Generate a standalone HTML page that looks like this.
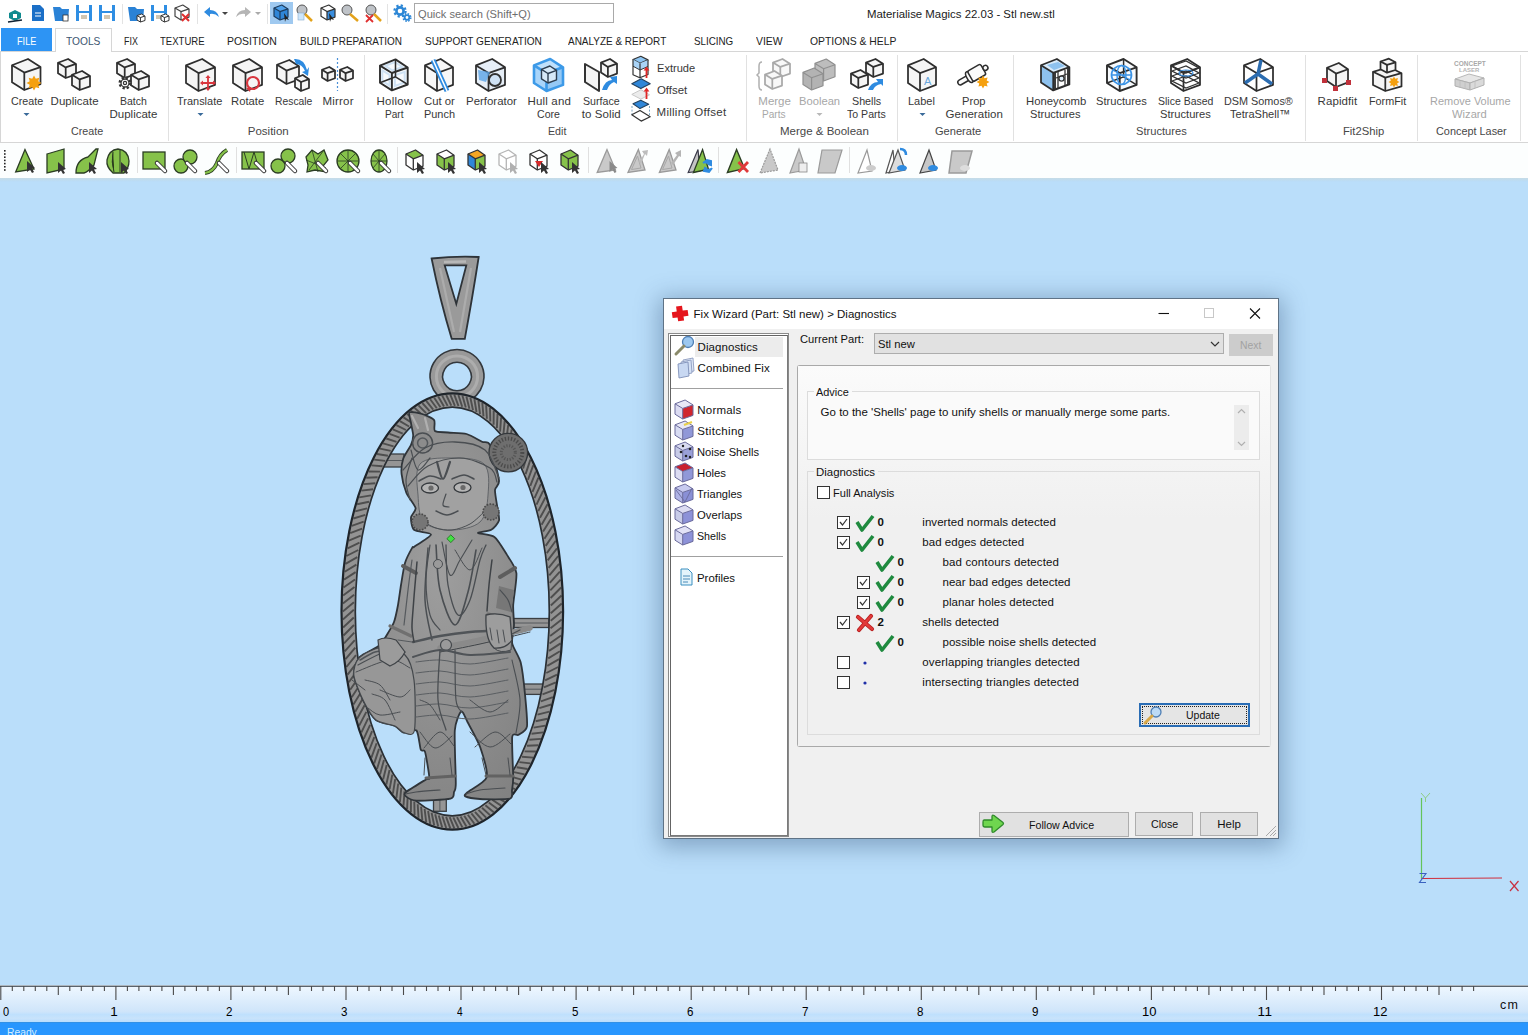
<!DOCTYPE html>
<html><head><meta charset="utf-8"><title>Materialise Magics</title>
<style>
*{margin:0;padding:0;box-sizing:border-box}
html,body{width:1528px;height:1035px;overflow:hidden;background:#badefa;font-family:"Liberation Sans",sans-serif;color:#1e1e1e;position:relative}
.a{position:absolute;white-space:nowrap;transform-origin:0 0}
.b{position:absolute}
svg{position:absolute;overflow:visible}
</style></head><body>
<div class="b" style="left:0;top:0;width:1528px;height:52px;background:#fff"></div>
<div class="b" style="left:0;top:51px;width:1528px;height:1px;background:#d6d6d6"></div>
<div class="b" style="left:1px;top:28px;width:51px;height:23px;background:#2d94f4"></div>
<div class="b" style="left:55px;top:28px;width:57px;height:24px;background:#fff;border:1px solid #d6d6d6;border-bottom:none"></div>
<div class="b" style="left:0;top:52px;width:1528px;height:90px;background:#fff;border-left:1px solid #d6d6d6"></div>
<div class="b" style="left:0;top:142px;width:1528px;height:1px;background:#d6d6d6"></div>
<div class="b" style="left:0;top:143px;width:1528px;height:35px;background:#fcfefe"></div>
<div class="b" style="left:0;top:178px;width:1528px;height:4px;background:linear-gradient(#c6dbe6,#bddcf2 60%,#b9ddfb)"></div>
<div class="b" style="left:414px;top:3px;width:200px;height:20px;border:1px solid #a9a9a9;background:#fff"></div>
<div class="b" style="left:270px;top:2px;width:23px;height:22px;background:#9fc9f0"></div>
<svg style="left:0;top:0" width="1528" height="1035" viewBox="0 0 1528 1035"><defs><radialGradient id="mg" cx="0.5" cy="0.4" r="0.7"><stop offset="0" stop-color="#9e9e9e"/><stop offset="1" stop-color="#828282"/></radialGradient></defs><rect x="378" y="454" width="26" height="13" fill="#959595" stroke="#3a3e42" stroke-width="1.3"/><line x1="378" y1="460.5" x2="404" y2="460.5" stroke="#55595d" stroke-width="1"/><rect x="508" y="618.5" width="41" height="9.0" fill="#959595" stroke="#3a3e42" stroke-width="1.3"/><line x1="508" y1="623.0" x2="549" y2="623.0" stroke="#55595d" stroke-width="1"/><rect x="522" y="684" width="23" height="10.399999999999977" fill="#959595" stroke="#3a3e42" stroke-width="1.3"/><line x1="522" y1="689.2" x2="545" y2="689.2" stroke="#55595d" stroke-width="1"/><rect x="433.5" y="796" width="12.800000000000011" height="15.299999999999955" fill="#959595" stroke="#3a3e42" stroke-width="1.3"/><line x1="439.9" y1="796" x2="439.9" y2="811.3" stroke="#55595d" stroke-width="1"/><path d="M431.6,258.5 Q455,256 478.7,257 Q472,300 464.8,338.8 L451.7,338.8 Q440,300 431.6,258.5Z M444.7,265.4 L466.3,265.4 L456.3,304Z" fill="#9a9a9a" fill-rule="evenodd" stroke="#2e3338" stroke-width="1.8"/><path d="M444,262 L466,261.5" stroke="#b8b8b8" stroke-width="2.6" fill="none"/><path d="M440,268 L454,332 M471,268 L460,332" stroke="#acacac" stroke-width="2.2" fill="none"/><path d="M457,349.5 a27,27 0 1,0 0.01,0Z M457,362.2 a14.3,14.3 0 1,1 -0.01,0Z" fill="#999999" fill-rule="evenodd" stroke="#33383d" stroke-width="1.6"/><circle cx="457" cy="376.5" r="20.6" fill="none" stroke="#adadad" stroke-width="3"/><ellipse cx="452.3" cy="611.5" rx="104" ry="211.3" fill="none" stroke="#939393" stroke-width="13.5"/><path d="M561.8,611.5L550.7,620.8M561.7,619.5L550.5,628.3M561.5,627.5L550.1,635.9M561.1,635.5L549.6,643.5M560.6,643.4L549.0,650.9M559.9,651.3L548.2,658.4M559.1,659.2L547.3,665.8M558.2,667.0L546.3,673.0M557.0,674.7L545.1,680.3M555.8,682.3L543.9,687.4M554.4,689.8L542.5,694.4M552.9,697.2L540.9,701.3M551.2,704.5L539.3,708.1M549.4,711.7L537.5,714.7M547.5,718.7L535.6,721.2M545.4,725.6L533.6,727.6M543.2,732.4L531.5,733.8M540.9,738.9L529.3,739.8M538.4,745.3L527.0,745.7M535.9,751.5L524.6,751.4M533.2,757.6L522.0,756.8M530.4,763.4L519.4,762.1M527.6,769.0L516.7,767.2M524.6,774.4L513.9,772.1M521.5,779.6L511.0,776.7M518.3,784.5L508.1,781.1M515.0,789.2L505.0,785.3M511.7,793.7L501.9,789.3M508.2,797.9L498.7,793.0M504.7,801.9L495.5,796.5M501.1,805.6L492.2,799.7M497.5,809.0L488.8,802.6M493.7,812.2L485.4,805.3M490.0,815.1L482.0,807.7M486.1,817.7L478.5,809.9M482.3,820.0L475.0,811.8M478.4,822.1L471.4,813.4M474.4,823.8L467.8,814.7M470.4,825.3L464.2,815.8M466.4,826.5L460.6,816.6M462.4,827.4L457.0,817.1M458.4,828.0L453.3,817.3M454.3,828.3L449.7,817.2M450.3,828.3L446.1,816.9M446.2,828.0L442.4,816.3M442.2,827.4L438.8,815.4M438.2,826.5L435.2,814.2M434.2,825.3L431.6,812.7M430.2,823.8L428.1,811.0M426.2,822.1L424.6,809.0M422.3,820.0L421.1,806.7M418.5,817.7L417.7,804.2M414.6,815.1L414.3,801.4M410.9,812.2L411.0,798.3M407.1,809.0L407.7,795.0M403.5,805.6L404.5,791.4M399.9,801.9L401.3,787.6M396.4,797.9L398.2,783.5M392.9,793.7L395.2,779.2M389.6,789.2L392.3,774.7M386.3,784.5L389.5,770.0M383.1,779.6L386.7,765.0M380.0,774.4L384.0,759.9M377.0,769.0L381.5,754.5M374.2,763.4L379.0,748.9M371.4,757.6L376.6,743.2M368.7,751.5L374.3,737.2M366.2,745.3L372.1,731.1M363.7,738.9L370.1,724.9M361.4,732.4L368.1,718.4M359.2,725.6L366.3,711.9M357.1,718.7L364.6,705.2M355.2,711.7L363.0,698.3M353.4,704.5L361.5,691.4M351.7,697.2L360.2,684.3M350.2,689.8L358.9,677.1M348.8,682.3L357.8,669.9M347.6,674.7L356.9,662.6M346.4,667.0L356.0,655.1M345.5,659.2L355.3,647.7M344.7,651.3L354.8,640.2M344.0,643.4L354.3,632.6M343.5,635.5L354.0,625.0M343.1,627.5L353.8,617.5M342.9,619.5L353.8,609.8M342.8,611.5L353.9,602.2M342.9,603.5L354.1,594.7M343.1,595.5L354.5,587.1M343.5,587.5L355.0,579.5M344.0,579.6L355.6,572.1M344.7,571.7L356.4,564.6M345.5,563.8L357.3,557.2M346.4,556.0L358.3,550.0M347.6,548.3L359.5,542.7M348.8,540.7L360.7,535.6M350.2,533.2L362.1,528.6M351.7,525.8L363.7,521.7M353.4,518.5L365.3,514.9M355.2,511.3L367.1,508.3M357.1,504.3L369.0,501.8M359.2,497.4L371.0,495.4M361.4,490.6L373.1,489.2M363.7,484.1L375.3,483.2M366.2,477.7L377.6,477.3M368.7,471.5L380.0,471.6M371.4,465.4L382.6,466.2M374.2,459.6L385.2,460.9M377.0,454.0L387.9,455.8M380.0,448.6L390.7,450.9M383.1,443.4L393.6,446.3M386.3,438.5L396.5,441.9M389.6,433.8L399.6,437.7M392.9,429.3L402.7,433.7M396.4,425.1L405.9,430.0M399.9,421.1L409.1,426.5M403.5,417.4L412.4,423.3M407.1,414.0L415.8,420.4M410.9,410.8L419.2,417.7M414.6,407.9L422.6,415.3M418.5,405.3L426.1,413.1M422.3,403.0L429.6,411.2M426.2,400.9L433.2,409.6M430.2,399.2L436.8,408.3M434.2,397.7L440.4,407.2M438.2,396.5L444.0,406.4M442.2,395.6L447.6,405.9M446.2,395.0L451.3,405.7M450.3,394.7L454.9,405.8M454.3,394.7L458.5,406.1M458.4,395.0L462.2,406.7M462.4,395.6L465.8,407.6M466.4,396.5L469.4,408.8M470.4,397.7L473.0,410.3M474.4,399.2L476.5,412.0M478.4,400.9L480.0,414.0M482.3,403.0L483.5,416.3M486.1,405.3L486.9,418.8M490.0,407.9L490.3,421.6M493.7,410.8L493.6,424.7M497.5,414.0L496.9,428.0M501.1,417.4L500.1,431.6M504.7,421.1L503.3,435.4M508.2,425.1L506.4,439.5M511.7,429.3L509.4,443.8M515.0,433.8L512.3,448.3M518.3,438.5L515.1,453.0M521.5,443.4L517.9,458.0M524.6,448.6L520.6,463.1M527.6,454.0L523.1,468.5M530.4,459.6L525.6,474.1M533.2,465.4L528.0,479.8M535.9,471.5L530.3,485.8M538.4,477.7L532.5,491.9M540.9,484.1L534.5,498.1M543.2,490.6L536.5,504.6M545.4,497.4L538.3,511.1M547.5,504.3L540.0,517.8M549.4,511.3L541.6,524.7M551.2,518.5L543.1,531.6M552.9,525.8L544.4,538.7M554.4,533.2L545.7,545.9M555.8,540.7L546.8,553.1M557.0,548.3L547.7,560.4M558.2,556.0L548.6,567.9M559.1,563.8L549.3,575.3M559.9,571.7L549.8,582.8M560.6,579.6L550.3,590.4M561.1,587.5L550.6,598.0M561.5,595.5L550.8,605.5M561.7,603.5L550.8,613.2" stroke="#4e4e4e" stroke-width="1.9" fill="none"/><ellipse cx="452.3" cy="611.5" rx="110.8" ry="218.1" fill="none" stroke="#1f252b" stroke-width="2.2"/><ellipse cx="452.3" cy="611.5" rx="97" ry="204.3" fill="none" stroke="#2a2f34" stroke-width="1.7"/><path d="M409.4,412.4 C410.7,411.3 419.1,413.1 422.0,414.0 C424.9,414.9 432.6,418.1 434.1,420.1 C435.6,422.1 433.3,429.6 434.9,431.0 C436.5,432.4 444.3,432.1 448.0,432.5 C451.7,432.9 462.6,432.9 466.6,434.0 C470.6,435.1 479.3,440.4 482.0,441.7 C484.7,443.0 488.0,440.5 490.0,445.0 C492.0,449.5 498.4,475.1 499.0,480.4 C499.6,485.6 495.2,486.8 495.0,490.0 C494.8,493.2 497.0,504.6 497.5,508.2 C498.0,511.8 499.7,518.1 499.0,520.6 C498.3,523.1 493.8,528.4 491.3,529.8 C488.9,531.2 477.6,532.2 478.0,533.0 C478.4,533.8 491.0,534.5 494.4,537.0 C497.8,539.5 504.2,550.4 506.8,554.6 C509.4,558.8 515.7,567.2 516.4,573.1 C517.1,579.0 513.5,598.9 513.2,605.0 C512.9,611.1 514.1,620.5 514.0,625.0 C513.9,629.5 511.4,638.9 512.2,643.3 C513.0,647.7 519.2,656.5 520.7,662.5 C522.2,668.5 524.3,687.0 525.0,694.4 C525.7,701.8 527.7,721.6 527.0,726.3 C526.3,731.0 520.3,733.6 518.6,734.8 C516.9,736.0 512.8,732.0 512.2,737.0 C511.6,742.0 513.2,771.1 513.2,777.3 C513.2,783.5 512.4,787.5 512.0,790.0 C511.6,792.5 513.7,797.6 510.0,798.6 C506.3,799.6 485.2,799.3 480.0,799.0 C474.8,798.7 466.9,797.2 465.4,796.4 C463.9,795.6 465.0,794.4 467.5,792.2 C470.0,790.0 485.2,782.5 486.7,777.3 C488.2,772.1 482.5,754.0 480.3,747.5 C478.1,741.0 469.7,726.2 467.5,722.0 C465.3,717.8 462.7,710.4 461.2,711.4 C459.7,712.4 455.4,722.1 454.8,730.5 C454.2,738.9 455.9,776.5 455.8,783.7 C455.7,790.9 454.6,790.3 454.0,792.0 C453.4,793.7 454.9,797.6 450.5,798.6 C446.1,799.6 421.7,801.0 416.5,800.7 C411.3,800.4 407.1,797.4 405.9,796.4 C404.7,795.4 403.6,794.2 405.9,792.2 C408.2,790.2 423.3,781.1 426.0,779.4 C428.7,777.7 429.4,780.5 429.3,777.3 C429.2,774.1 426.0,755.0 425.0,751.8 C424.0,748.6 421.8,752.2 420.8,749.7 C419.8,747.2 418.5,732.5 416.5,730.5 C414.5,728.5 406.3,733.2 403.8,732.7 C401.3,732.2 398.2,727.5 395.0,726.0 C391.8,724.5 379.7,722.9 376.0,720.0 C372.3,717.1 366.0,706.0 363.4,700.8 C360.8,695.5 354.3,680.0 353.8,675.0 C353.3,670.0 357.3,660.7 359.0,658.0 C360.7,655.3 365.6,653.5 368.0,652.0 C370.4,650.5 377.7,647.2 380.0,645.0 C382.3,642.8 386.4,635.7 388.0,633.0 C389.6,630.3 392.8,625.3 394.0,622.0 C395.2,618.7 397.2,609.3 398.0,605.0 C398.8,600.7 400.2,589.9 401.0,585.0 C401.8,580.1 403.7,567.4 405.0,563.0 C406.3,558.6 411.2,549.5 412.3,547.6 C413.4,545.7 411.8,548.4 414.0,546.9 C416.2,545.4 431.0,536.5 431.0,534.5 C431.0,532.5 416.3,531.8 414.0,529.8 C411.7,527.8 410.8,520.0 411.0,517.5 C411.2,515.0 416.1,511.1 415.6,508.2 C415.1,505.3 407.9,496.7 406.3,492.7 C404.7,488.7 402.0,478.2 401.6,474.2 C401.2,470.2 402.1,462.1 403.2,458.7 C404.3,455.3 409.8,447.5 411.0,444.8 C412.2,442.1 413.2,438.1 413.2,435.6 C413.2,433.1 411.4,425.9 411.0,423.2 C410.6,420.5 408.1,413.5 409.4,412.4Z" fill="url(#mg)" stroke="#30353a" stroke-width="1.8"/><path d="M359.0,658.0 C362.5,654.4 373.9,648.4 380.0,648.0 C386.1,647.6 400.5,650.7 405.0,655.0 C409.5,659.3 412.7,669.9 414.0,680.0 C415.3,690.1 415.8,723.5 414.4,730.5 C413.0,737.5 406.4,733.3 403.8,732.7 C401.2,732.1 398.7,727.7 395.0,726.0 C391.3,724.3 380.2,723.4 376.0,720.0 C371.8,716.6 366.4,706.8 363.4,700.8 C360.4,694.8 354.4,680.7 353.8,675.0 C353.2,669.3 355.5,661.6 359.0,658.0Z" fill="#979797" stroke="#43474b" stroke-width="1.2"/><path d="M358.0,665.0 C362.5,662.8 377.2,654.2 385.0,652.0 C392.8,649.8 401.7,652.0 405.0,652.0" fill="none" stroke="#4a4e52" stroke-width="1.2" stroke-linecap="round"/><path d="M356.0,672.0 C361.7,670.0 381.0,660.7 390.0,660.0 C399.0,659.3 406.7,666.7 410.0,668.0" fill="none" stroke="#4a4e52" stroke-width="1" stroke-linecap="round"/><path d="M372.0,694.0 C374.2,695.0 381.2,695.7 385.0,700.0 C388.8,704.3 393.3,716.7 395.0,720.0" fill="none" stroke="#4a4e52" stroke-width="1" stroke-linecap="round"/><path d="M380.0,690.0 C383.3,691.2 395.0,697.0 400.0,697.0 C405.0,697.0 408.3,691.2 410.0,690.0" fill="none" stroke="#4a4e52" stroke-width="1" stroke-linecap="round"/><path d="M368.0,708.0 C370.0,709.2 374.7,714.3 380.0,715.0 C385.3,715.7 396.7,712.5 400.0,712.0" fill="none" stroke="#4a4e52" stroke-width="1" stroke-linecap="round"/><path d="M420.0,464.0 C425.3,457.8 439.3,458.0 450.0,458.0 C460.7,458.0 477.7,457.8 484.0,464.0 C490.3,470.2 488.7,485.3 488.0,495.0 C487.3,504.7 486.2,516.2 480.0,522.0 C473.8,527.8 460.3,530.0 451.0,530.0 C441.7,530.0 429.5,527.8 424.0,522.0 C418.5,516.2 418.7,504.7 418.0,495.0 C417.3,485.3 414.7,470.2 420.0,464.0Z" fill="#a1a1a1" stroke="#5a5e62" stroke-width="0.9"/><circle cx="508.3" cy="452.6" r="19.3" fill="#6e6e6e" stroke="#34383c" stroke-width="1.3"/><circle cx="508.3" cy="452.6" r="14" fill="none" stroke="#4a4a4a" stroke-width="4" stroke-dasharray="1.3 1.8"/><circle cx="508.3" cy="452.6" r="7" fill="none" stroke="#555" stroke-width="3" stroke-dasharray="1.2 1.6"/><circle cx="422.6" cy="443" r="10" fill="#8c8c8c" stroke="#4a4e52" stroke-width="1.5"/><circle cx="422.6" cy="443" r="5" fill="none" stroke="#55595d" stroke-width="1.5"/><polyline points="412.0,416.0 418.0,428.0" fill="none" stroke="#b0b0b0" stroke-width="2.2" stroke-linecap="round"/><polyline points="425.0,418.0 428.0,430.0" fill="none" stroke="#b0b0b0" stroke-width="2.2" stroke-linecap="round"/><path d="M403.0,470.0 C406.7,466.3 416.3,452.7 425.0,448.0 C433.7,443.3 445.0,441.7 455.0,442.0 C465.0,442.3 477.7,444.0 485.0,450.0 C492.3,456.0 496.7,473.3 499.0,478.0" fill="none" stroke="#4a4e52" stroke-width="1.3" stroke-linecap="round"/><path d="M408.0,486.0 C411.3,482.7 419.3,470.7 428.0,466.0 C436.7,461.3 449.7,457.7 460.0,458.0 C470.3,458.3 483.8,464.0 490.0,468.0 C496.2,472.0 495.8,479.7 497.0,482.0" fill="none" stroke="#4a4e52" stroke-width="1.2" stroke-linecap="round"/><path d="M410.0,500.0 C409.3,496.7 405.7,487.0 406.0,480.0 C406.3,473.0 411.0,461.7 412.0,458.0" fill="none" stroke="#4a4e52" stroke-width="1.2" stroke-linecap="round"/><path d="M419.0,481.0 C420.8,480.2 426.3,476.3 430.0,476.0 C433.7,475.7 439.2,478.5 441.0,479.0" fill="none" stroke="#4a4e52" stroke-width="1.6" stroke-linecap="round"/><path d="M452.0,479.0 C454.0,478.3 460.3,475.0 464.0,475.0 C467.7,475.0 472.3,478.3 474.0,479.0" fill="none" stroke="#4a4e52" stroke-width="1.6" stroke-linecap="round"/><ellipse cx="430" cy="488" rx="8.5" ry="5" fill="#b5b5b5" stroke="#34383c" stroke-width="1.3"/><ellipse cx="462.5" cy="487.5" rx="8.5" ry="5" fill="#b5b5b5" stroke="#34383c" stroke-width="1.3"/><circle cx="431" cy="488" r="2.6" fill="#6a6a6a"/><circle cx="463" cy="487.5" r="2.6" fill="#6a6a6a"/><path d="M437.0,462.0 C438.0,464.8 440.8,479.0 443.0,479.0 C445.2,479.0 448.8,464.8 450.0,462.0" fill="none" stroke="#4a4e52" stroke-width="2.2" stroke-linecap="round"/><path d="M446.0,494.0 C445.5,495.8 442.5,502.8 443.0,505.0 C443.5,507.2 448.0,506.7 449.0,507.0" fill="none" stroke="#4a4e52" stroke-width="1.2" stroke-linecap="round"/><path d="M436.0,511.0 C437.8,511.7 443.3,515.0 447.0,515.0 C450.7,515.0 456.2,511.7 458.0,511.0" fill="none" stroke="#4a4e52" stroke-width="1.5" stroke-linecap="round"/><path d="M420.0,520.0 C422.7,521.3 430.7,526.3 436.0,528.0 C441.3,529.7 446.3,530.7 452.0,530.0 C457.7,529.3 464.7,527.0 470.0,524.0 C475.3,521.0 481.7,514.0 484.0,512.0" fill="none" stroke="#4a4e52" stroke-width="1.0" stroke-linecap="round"/><circle cx="420" cy="522" r="8" fill="#767676" stroke="#484848" stroke-width="1.6" stroke-dasharray="1.6 1.4"/><circle cx="491" cy="512" r="8" fill="#767676" stroke="#484848" stroke-width="1.6" stroke-dasharray="1.6 1.4"/><path d="M428.0,548.0 C427.5,556.7 424.3,584.7 425.0,600.0 C425.7,615.3 430.8,633.3 432.0,640.0" fill="none" stroke="#4a4e52" stroke-width="1.5" stroke-linecap="round"/><path d="M436.0,545.0 C436.7,552.5 436.8,576.7 440.0,590.0 C443.2,603.3 450.3,624.7 455.0,625.0 C459.7,625.3 464.5,604.5 468.0,592.0 C471.5,579.5 474.7,557.0 476.0,550.0" fill="none" stroke="#4a4e52" stroke-width="1.6" stroke-linecap="round"/><path d="M442.0,542.0 C443.3,547.5 447.0,572.0 450.0,575.0 C453.0,578.0 456.3,565.8 460.0,560.0 C463.7,554.2 470.0,543.3 472.0,540.0" fill="none" stroke="#4a4e52" stroke-width="1.1" stroke-linecap="round"/><circle cx="438" cy="564" r="4.5" fill="#9a9a9a" stroke="#4a4e52" stroke-width="1"/><polyline points="403.0,566.0 416.0,573.0" fill="none" stroke="#5d5d5d" stroke-width="4" stroke-linecap="round"/><polyline points="500.0,577.0 515.0,568.0" fill="none" stroke="#5d5d5d" stroke-width="4" stroke-linecap="round"/><polyline points="390.0,626.0 411.0,636.0" fill="none" stroke="#707070" stroke-width="3.2" stroke-linecap="round"/><polyline points="488.0,614.0 509.0,618.0" fill="none" stroke="#707070" stroke-width="3.2" stroke-linecap="round"/><path d="M499,586 L514,590 L511,612 L496,608Z" fill="#777"/><path d="M413.0,642.0 C417.5,641.0 430.5,637.7 440.0,636.0 C449.5,634.3 458.7,633.0 470.0,632.0 C481.3,631.0 501.7,630.3 508.0,630.0" fill="none" stroke="#505458" stroke-width="2.4" stroke-linecap="round"/><path d="M440.0,648.0 C446.7,646.7 465.0,643.3 480.0,640.0 C495.0,636.7 521.7,630.0 530.0,628.0" fill="none" stroke="#8a8a8a" stroke-width="5.5" stroke-linecap="round"/><path d="M440.0,652.0 C446.7,650.7 465.0,647.3 480.0,644.0 C495.0,640.7 521.7,634.0 530.0,632.0" fill="none" stroke="#3e4246" stroke-width="1" stroke-linecap="round"/><circle cx="446" cy="645" r="5.5" fill="#9a9a9a" stroke="#43474b" stroke-width="1.2"/><path d="M494,640 Q503,632 512,636 L511,650 Q500,654 494,648Z" fill="#979797" stroke="#43474b" stroke-width="1"/><path d="M416.0,662.0 C420.0,661.7 431.0,659.7 440.0,660.0 C449.0,660.3 458.7,664.3 470.0,664.0 C481.3,663.7 501.7,659.0 508.0,658.0" fill="none" stroke="#5a5e62" stroke-width="1" stroke-linecap="round"/><path d="M416.0,673.0 C420.0,672.7 431.0,670.7 440.0,671.0 C449.0,671.3 458.7,675.3 470.0,675.0 C481.3,674.7 501.7,670.0 508.0,669.0" fill="none" stroke="#5a5e62" stroke-width="1" stroke-linecap="round"/><path d="M416.0,684.0 C420.0,683.7 431.0,681.7 440.0,682.0 C449.0,682.3 458.7,686.3 470.0,686.0 C481.3,685.7 501.7,681.0 508.0,680.0" fill="none" stroke="#5a5e62" stroke-width="1" stroke-linecap="round"/><path d="M416.0,695.0 C420.0,694.7 431.0,692.7 440.0,693.0 C449.0,693.3 458.7,697.3 470.0,697.0 C481.3,696.7 501.7,692.0 508.0,691.0" fill="none" stroke="#5a5e62" stroke-width="1" stroke-linecap="round"/><path d="M416.0,706.0 C420.0,705.7 431.0,703.7 440.0,704.0 C449.0,704.3 458.7,708.3 470.0,708.0 C481.3,707.7 501.7,703.0 508.0,702.0" fill="none" stroke="#5a5e62" stroke-width="1" stroke-linecap="round"/><path d="M416.0,717.0 C420.0,716.7 431.0,714.7 440.0,715.0 C449.0,715.3 458.7,719.3 470.0,719.0 C481.3,718.7 501.7,714.0 508.0,713.0" fill="none" stroke="#5a5e62" stroke-width="1" stroke-linecap="round"/><path d="M413.0,657.0 C417.5,655.8 430.5,650.3 440.0,650.0 C449.5,649.7 458.3,654.7 470.0,655.0 C481.7,655.3 503.3,652.5 510.0,652.0" fill="none" stroke="#4f5357" stroke-width="2" stroke-linecap="round"/><path d="M440.0,650.0 C439.7,658.3 437.0,686.7 438.0,700.0 C439.0,713.3 444.7,725.0 446.0,730.0" fill="none" stroke="#4a4e52" stroke-width="1.3" stroke-linecap="round"/><path d="M455.0,650.0 C455.2,658.3 454.8,689.7 456.0,700.0 C457.2,710.3 461.0,710.0 462.0,712.0" fill="none" stroke="#4a4e52" stroke-width="1.2" stroke-linecap="round"/><path d="M420.0,732.0 C422.5,734.7 429.7,747.3 435.0,748.0 C440.3,748.7 449.2,738.0 452.0,736.0" fill="none" stroke="#4a4e52" stroke-width="1" stroke-linecap="round"/><path d="M424.0,748.0 C426.7,745.3 435.0,732.3 440.0,732.0 C445.0,731.7 451.7,743.7 454.0,746.0" fill="none" stroke="#4a4e52" stroke-width="1" stroke-linecap="round"/><path d="M470.0,732.0 C473.3,734.5 483.3,746.7 490.0,747.0 C496.7,747.3 506.7,736.2 510.0,734.0" fill="none" stroke="#4a4e52" stroke-width="1" stroke-linecap="round"/><path d="M475.0,747.0 C478.3,744.5 489.0,732.5 495.0,732.0 C501.0,731.5 508.3,742.0 511.0,744.0" fill="none" stroke="#4a4e52" stroke-width="1" stroke-linecap="round"/><polyline points="426.0,778.0 455.0,776.0" fill="none" stroke="#626262" stroke-width="3" stroke-linecap="round"/><polyline points="486.0,776.0 513.0,776.0" fill="none" stroke="#626262" stroke-width="3" stroke-linecap="round"/><path d="M512.0,660.0 C513.3,666.7 519.3,687.8 520.0,700.0 C520.7,712.2 516.7,727.5 516.0,733.0" fill="none" stroke="#4a4e52" stroke-width="1.1" stroke-linecap="round"/><path d="M365.0,680.0 C367.5,680.8 375.8,681.7 380.0,685.0 C384.2,688.3 388.3,697.5 390.0,700.0" fill="none" stroke="#4a4e52" stroke-width="1" stroke-linecap="round"/><path d="M412.0,560.0 C411.3,565.0 409.3,579.2 408.0,590.0 C406.7,600.8 404.7,619.2 404.0,625.0" fill="none" stroke="#55595d" stroke-width="1.2" stroke-linecap="round"/><polyline points="398.0,640.0 412.0,642.0" fill="none" stroke="#55595d" stroke-width="1" stroke-linecap="round"/><path d="M430.0,545.0 C429.3,550.8 426.0,568.3 426.0,580.0 C426.0,591.7 427.7,606.7 430.0,615.0 C432.3,623.3 438.3,627.5 440.0,630.0" fill="none" stroke="#4a4e52" stroke-width="1.2" stroke-linecap="round"/><path d="M446.0,545.0 C446.3,551.7 446.0,573.3 448.0,585.0 C450.0,596.7 454.3,612.5 458.0,615.0 C461.7,617.5 466.3,609.2 470.0,600.0 C473.7,590.8 477.3,569.2 480.0,560.0 C482.7,550.8 485.0,547.5 486.0,545.0" fill="none" stroke="#4a4e52" stroke-width="1.3" stroke-linecap="round"/><path d="M455.0,550.0 C457.5,553.3 465.5,570.3 470.0,570.0 C474.5,569.7 480.0,551.7 482.0,548.0" fill="none" stroke="#4a4e52" stroke-width="1" stroke-linecap="round"/><path d="M500.0,590.0 C501.3,591.7 506.0,596.3 508.0,600.0 C510.0,603.7 511.3,610.0 512.0,612.0" fill="none" stroke="#4a4e52" stroke-width="1.2" stroke-linecap="round"/><path d="M420.0,700.0 C421.7,700.8 426.7,701.7 430.0,705.0 C433.3,708.3 438.3,717.5 440.0,720.0" fill="none" stroke="#4a4e52" stroke-width="1" stroke-linecap="round"/><path d="M470.0,700.0 C473.3,702.0 483.7,712.0 490.0,712.0 C496.3,712.0 505.0,702.0 508.0,700.0" fill="none" stroke="#4a4e52" stroke-width="1" stroke-linecap="round"/><path d="M360.0,660.0 C362.5,658.7 369.7,653.7 375.0,652.0 C380.3,650.3 389.2,650.3 392.0,650.0" fill="none" stroke="#505458" stroke-width="1.6" stroke-linecap="round"/><polyline points="352.0,680.0 365.0,690.0" fill="none" stroke="#4a4e52" stroke-width="1" stroke-linecap="round"/><polyline points="425.0,758.0 424.0,775.0" fill="none" stroke="#4a4e52" stroke-width="1" stroke-linecap="round"/><polyline points="450.0,758.0 452.0,775.0" fill="none" stroke="#4a4e52" stroke-width="1" stroke-linecap="round"/><polyline points="482.0,758.0 486.0,775.0" fill="none" stroke="#4a4e52" stroke-width="1" stroke-linecap="round"/><polyline points="508.0,758.0 510.0,775.0" fill="none" stroke="#4a4e52" stroke-width="1" stroke-linecap="round"/><path d="M406.0,794.0 C407.7,793.7 410.3,792.7 416.0,792.0 C421.7,791.3 436.0,790.3 440.0,790.0" fill="none" stroke="#4a4e52" stroke-width="1.1" stroke-linecap="round"/><path d="M466.0,794.0 C468.3,793.3 473.5,791.0 480.0,790.0 C486.5,789.0 500.8,788.3 505.0,788.0" fill="none" stroke="#4a4e52" stroke-width="1.1" stroke-linecap="round"/><path d="M503.0,640.0 C504.5,639.0 509.2,635.7 512.0,634.0 C514.8,632.3 518.7,630.7 520.0,630.0" fill="none" stroke="#4a4e52" stroke-width="1.2" stroke-linecap="round"/><path d="M411.0,450.0 C412.2,453.3 414.8,468.7 418.0,470.0 C421.2,471.3 428.0,460.0 430.0,458.0" fill="none" stroke="#4a4e52" stroke-width="1.2" stroke-linecap="round"/><path d="M417.0,562.0 C416.7,565.8 415.7,577.0 415.0,585.0 C414.3,593.0 413.5,602.8 413.0,610.0 C412.5,617.2 411.8,622.7 412.0,628.0 C412.2,633.3 413.7,639.7 414.0,642.0" fill="none" stroke="#3e4246" stroke-width="1.5" stroke-linecap="round"/><path d="M492.0,560.0 C491.5,564.2 489.8,576.5 489.0,585.0 C488.2,593.5 487.3,606.7 487.0,611.0" fill="none" stroke="#3e4246" stroke-width="1.5" stroke-linecap="round"/><path d="M486,615 Q498,612 510,617 L512,640 Q506,649 494,648 Q485,640 486,615Z" fill="#9d9d9d" stroke="#3e4246" stroke-width="1.3"/><polyline points="490.0,628.0 492.0,640.0" fill="none" stroke="#4a4e52" stroke-width="1" stroke-linecap="round"/><polyline points="497.0,630.0 499.0,643.0" fill="none" stroke="#4a4e52" stroke-width="1" stroke-linecap="round"/><polyline points="503.0,630.0 505.0,642.0" fill="none" stroke="#4a4e52" stroke-width="1" stroke-linecap="round"/><path d="M378,640 Q385,636 396,640 L405,652 Q400,662 390,666 L380,660Z" fill="#9b9b9b" stroke="#3e4246" stroke-width="1.2"/><path d="M450.8,534.8 L454.7,538.7 L450.8,542.6 L446.9,538.7Z" fill="#43e043" stroke="#1f6a1f" stroke-width="0.8"/></svg>
<svg style="left:0px;top:0px" width="420" height="28" viewBox="0 0 420 28"><path d="M9 13 L15 10 L21 13 L21 18 L15 21 L9 18 Z" fill="#0f8a8f"/><path d="M13 14 L17 14 L17 18 L13 18Z" fill="#fff"/><path d="M8 22 L22 20" stroke="#123" stroke-width="1.5"/><path d="M32 5 L40 5 L44 9 L44 21 L32 21 Z" fill="#1b6fc7"/><path d="M35 13h6M35 16h6" stroke="#fff" stroke-width="1.2"/><path d="M53 7 L60 7 L62 9 L69 9 L68 21 L55 21 Z" fill="#2a82d6"/><rect x="63" y="15" width="5" height="6" fill="#fff" stroke="#333" stroke-width="0.8"/><path d="M76 5 L92 5 L92 21 L76 21 Z" fill="#2f8ee3"/><rect x="79" y="5" width="10" height="6" fill="#fff"/><rect x="79" y="13" width="10" height="8" fill="#fff"/><path d="M81 16h6M81 18h6" stroke="#8a6f3c" stroke-width="0.8"/><path d="M99 5 L115 5 L115 21 L99 21 Z" fill="#2f8ee3"/><rect x="102" y="5" width="10" height="6" fill="#fff"/><rect x="102" y="13" width="10" height="8" fill="#fff"/><path d="M104 16h6M104 18h6" stroke="#8a6f3c" stroke-width="0.8"/><path d="M151 5 L167 5 L167 21 L151 21 Z" fill="#2f8ee3"/><rect x="154" y="5" width="10" height="6" fill="#fff"/><rect x="154" y="13" width="10" height="8" fill="#fff"/><path d="M156 16h6M156 18h6" stroke="#8a6f3c" stroke-width="0.8"/><path d="M128 7 L135 7 L137 9 L144 9 L143 21 L130 21 Z" fill="#2a82d6"/><polygon points="137.0,15.6 141.5,14.0 145.0,16.1 140.4,17.5" fill="#fff"/><polygon points="137.0,15.6 140.4,17.5 140.4,22.0 137.0,20.0" fill="#fff"/><polygon points="140.4,17.5 145.0,16.1 145.0,20.5 140.4,22.0" fill="#fff"/><polygon points="137.0,15.6 141.5,14.0 145.0,16.1 145.0,20.5 140.4,22.0 137.0,20.0" fill="none" stroke="#333" stroke-width="1" stroke-linejoin="round"/><polyline points="137.0,15.6 140.4,17.5 145.0,16.1" fill="none" stroke="#333" stroke-width="1" stroke-linejoin="round"/><line x1="140.4" y1="17.5" x2="140.4" y2="22.0" stroke="#333" stroke-width="1"/><polygon points="161.0,15.6 165.5,14.0 169.0,16.1 164.4,17.5" fill="#fff"/><polygon points="161.0,15.6 164.4,17.5 164.4,22.0 161.0,20.0" fill="#fff"/><polygon points="164.4,17.5 169.0,16.1 169.0,20.5 164.4,22.0" fill="#fff"/><polygon points="161.0,15.6 165.5,14.0 169.0,16.1 169.0,20.5 164.4,22.0 161.0,20.0" fill="none" stroke="#333" stroke-width="1" stroke-linejoin="round"/><polyline points="161.0,15.6 164.4,17.5 169.0,16.1" fill="none" stroke="#333" stroke-width="1" stroke-linejoin="round"/><line x1="164.4" y1="17.5" x2="164.4" y2="22.0" stroke="#333" stroke-width="1"/><polygon points="175.0,8.0 182.8,5.0 189.0,8.9 181.0,11.6" fill="#fff"/><polygon points="175.0,8.0 181.0,11.6 181.0,20.0 175.0,16.2" fill="#fff"/><polygon points="181.0,11.6 189.0,8.9 189.0,17.1 181.0,20.0" fill="#fff"/><polygon points="175.0,8.0 182.8,5.0 189.0,8.9 189.0,17.1 181.0,20.0 175.0,16.2" fill="none" stroke="#444" stroke-width="1.2" stroke-linejoin="round"/><polyline points="175.0,8.0 181.0,11.6 189.0,8.9" fill="none" stroke="#444" stroke-width="1.2" stroke-linejoin="round"/><line x1="181.0" y1="11.6" x2="181.0" y2="20.0" stroke="#444" stroke-width="1.2"/><path d="M182 14 L189 21 M189 14 L182 21" stroke="#e03030" stroke-width="2"/><path d="M122.5 4v20M197.5 4v20M267.5 4v20M387.5 4v20" stroke="#e3e3e3"/><path d="M204 12 L210 7 L210 10 Q217 10 219 17 Q215 13 210 14 L210 17 Z" fill="#2f8be0"/><path d="M222 12h6l-3 3z" fill="#444"/><path d="M251 12 L245 7 L245 10 Q238 10 236 17 Q240 13 245 14 L245 17 Z" fill="#b5b5b5"/><path d="M255 12h6l-3 3z" fill="#aaa"/><polygon points="274.0,8.0 281.8,5.0 288.0,8.9 280.0,11.6" fill="#4ea0ea"/><polygon points="274.0,8.0 280.0,11.6 280.0,20.0 274.0,16.2" fill="#2f86d8"/><polygon points="280.0,11.6 288.0,8.9 288.0,17.1 280.0,20.0" fill="#2f86d8"/><polygon points="274.0,8.0 281.8,5.0 288.0,8.9 288.0,17.1 280.0,20.0 274.0,16.2" fill="none" stroke="#1d3c5e" stroke-width="1.2" stroke-linejoin="round"/><polyline points="274.0,8.0 280.0,11.6 288.0,8.9" fill="none" stroke="#1d3c5e" stroke-width="1.2" stroke-linejoin="round"/><line x1="280.0" y1="11.6" x2="280.0" y2="20.0" stroke="#1d3c5e" stroke-width="1.2"/><path d="M284 13 L289 20 L286 19 L285 22Z" fill="#222"/><circle cx="302" cy="10" r="5" fill="#bfc3c8" stroke="#555" stroke-width="1"/><path d="M305 14 L312 21" stroke="#e3a21a" stroke-width="2.5"/><rect x="298" y="13" width="6" height="7" fill="#cde6fb" stroke="#8ac" stroke-width="0.6"/><polygon points="321.0,8.0 328.8,5.0 335.0,8.9 327.0,11.6" fill="#fff"/><polygon points="321.0,8.0 327.0,11.6 327.0,20.0 321.0,16.2" fill="#fff"/><polygon points="327.0,11.6 335.0,8.9 335.0,17.1 327.0,20.0" fill="#3a8ede"/><polygon points="321.0,8.0 328.8,5.0 335.0,8.9 335.0,17.1 327.0,20.0 321.0,16.2" fill="none" stroke="#333" stroke-width="1.2" stroke-linejoin="round"/><polyline points="321.0,8.0 327.0,11.6 335.0,8.9" fill="none" stroke="#333" stroke-width="1.2" stroke-linejoin="round"/><line x1="327.0" y1="11.6" x2="327.0" y2="20.0" stroke="#333" stroke-width="1.2"/><path d="M329 13 L334 20 L331 19 L330 22Z" fill="#222"/><circle cx="347" cy="10" r="5" fill="#bfc3c8" stroke="#555" stroke-width="1"/><path d="M350 14 L358 21" stroke="#e3a21a" stroke-width="2.5"/><circle cx="371" cy="10" r="5" fill="#bfc3c8" stroke="#555" stroke-width="1"/><path d="M374 14 L381 21" stroke="#e3a21a" stroke-width="2.5"/><path d="M366 15 L373 22 M373 15 L366 22" stroke="#e03030" stroke-width="1.8"/><circle cx="400" cy="11" r="3.6" fill="none" stroke="#2d87d6" stroke-width="2.6"/><circle cx="400" cy="11" r="5.6" fill="none" stroke="#2d87d6" stroke-width="2.2" stroke-dasharray="2.2 2.2"/><circle cx="407" cy="17.5" r="2.3" fill="none" stroke="#2d87d6" stroke-width="1.8"/><circle cx="407" cy="17.5" r="3.8" fill="none" stroke="#2d87d6" stroke-width="1.6" stroke-dasharray="1.6 1.4"/></svg>
<svg style="left:0px;top:0px" width="1528" height="143" viewBox="0 0 1528 143"><line x1="168.5" y1="55" x2="168.5" y2="141" stroke="#e1e1e1"/><line x1="364.5" y1="55" x2="364.5" y2="141" stroke="#e1e1e1"/><line x1="746.5" y1="55" x2="746.5" y2="141" stroke="#e1e1e1"/><line x1="897.5" y1="55" x2="897.5" y2="141" stroke="#e1e1e1"/><line x1="1013.5" y1="55" x2="1013.5" y2="141" stroke="#e1e1e1"/><line x1="1305.5" y1="55" x2="1305.5" y2="141" stroke="#e1e1e1"/><line x1="1417.5" y1="55" x2="1417.5" y2="141" stroke="#e1e1e1"/><line x1="1520.5" y1="55" x2="1520.5" y2="141" stroke="#e1e1e1"/><path d="M23.5 113 h6 l-3 3z" fill="#3a6a9a"/><path d="M197.5 113 h6 l-3 3z" fill="#3a6a9a"/><path d="M816.5 113 h6 l-3 3z" fill="#b8b8b8"/><path d="M919.5 113 h6 l-3 3z" fill="#3a6a9a"/><polygon points="12.0,65.2 28.0,59.0 40.5,67.1 24.3,72.6" fill="#f5f5f5"/><polygon points="12.0,65.2 24.3,72.6 24.3,90.0 12.0,82.2" fill="#f5f5f5"/><polygon points="24.3,72.6 40.5,67.1 40.5,84.1 24.3,90.0" fill="#f5f5f5"/><polygon points="12.0,65.2 28.0,59.0 40.5,67.1 40.5,84.1 24.3,90.0 12.0,82.2" fill="none" stroke="#2e2e2e" stroke-width="1.75" stroke-linejoin="round"/><polyline points="12.0,65.2 24.3,72.6 40.5,67.1" fill="none" stroke="#2e2e2e" stroke-width="1.75" stroke-linejoin="round"/><line x1="24.3" y1="72.6" x2="24.3" y2="90.0" stroke="#2e2e2e" stroke-width="1.75"/><polygon points="41.5,83.0 38.3,84.8 39.3,88.3 35.8,87.3 34.0,90.5 32.2,87.3 28.7,88.3 29.7,84.8 26.5,83.0 29.7,81.2 28.7,77.7 32.2,78.7 34.0,75.5 35.8,78.7 39.3,77.7 38.3,81.2" fill="#f5a00f"/><polygon points="58.0,62.8 68.1,59.0 76.0,63.9 65.7,67.4" fill="#f5f5f5"/><polygon points="58.0,62.8 65.7,67.4 65.7,78.0 58.0,73.2" fill="#f5f5f5"/><polygon points="65.7,67.4 76.0,63.9 76.0,74.4 65.7,78.0" fill="#f5f5f5"/><polygon points="58.0,62.8 68.1,59.0 76.0,63.9 76.0,74.4 65.7,78.0 58.0,73.2" fill="none" stroke="#2e2e2e" stroke-width="1.75" stroke-linejoin="round"/><polyline points="58.0,62.8 65.7,67.4 76.0,63.9" fill="none" stroke="#2e2e2e" stroke-width="1.75" stroke-linejoin="round"/><line x1="65.7" y1="67.4" x2="65.7" y2="78.0" stroke="#2e2e2e" stroke-width="1.75"/><polygon points="72.0,74.8 82.1,71.0 90.0,75.9 79.7,79.4" fill="#f5f5f5"/><polygon points="72.0,74.8 79.7,79.4 79.7,90.0 72.0,85.2" fill="#f5f5f5"/><polygon points="79.7,79.4 90.0,75.9 90.0,86.4 79.7,90.0" fill="#f5f5f5"/><polygon points="72.0,74.8 82.1,71.0 90.0,75.9 90.0,86.4 79.7,90.0 72.0,85.2" fill="none" stroke="#2e2e2e" stroke-width="1.75" stroke-linejoin="round"/><polyline points="72.0,74.8 79.7,79.4 90.0,75.9" fill="none" stroke="#2e2e2e" stroke-width="1.75" stroke-linejoin="round"/><line x1="79.7" y1="79.4" x2="79.7" y2="90.0" stroke="#2e2e2e" stroke-width="1.75"/><polygon points="117.0,62.8 127.1,59.0 135.0,63.9 124.7,67.4" fill="#f5f5f5"/><polygon points="117.0,62.8 124.7,67.4 124.7,78.0 117.0,73.2" fill="#f5f5f5"/><polygon points="124.7,67.4 135.0,63.9 135.0,74.4 124.7,78.0" fill="#f5f5f5"/><polygon points="117.0,62.8 127.1,59.0 135.0,63.9 135.0,74.4 124.7,78.0 117.0,73.2" fill="none" stroke="#2e2e2e" stroke-width="1.75" stroke-linejoin="round"/><polyline points="117.0,62.8 124.7,67.4 135.0,63.9" fill="none" stroke="#2e2e2e" stroke-width="1.75" stroke-linejoin="round"/><line x1="124.7" y1="67.4" x2="124.7" y2="78.0" stroke="#2e2e2e" stroke-width="1.75"/><polygon points="131.0,74.8 141.1,71.0 149.0,75.9 138.7,79.4" fill="#f5f5f5"/><polygon points="131.0,74.8 138.7,79.4 138.7,90.0 131.0,85.2" fill="#f5f5f5"/><polygon points="138.7,79.4 149.0,75.9 149.0,86.4 138.7,90.0" fill="#f5f5f5"/><polygon points="131.0,74.8 141.1,71.0 149.0,75.9 149.0,86.4 138.7,90.0 131.0,85.2" fill="none" stroke="#2e2e2e" stroke-width="1.75" stroke-linejoin="round"/><polyline points="131.0,74.8 138.7,79.4 149.0,75.9" fill="none" stroke="#2e2e2e" stroke-width="1.75" stroke-linejoin="round"/><line x1="138.7" y1="79.4" x2="138.7" y2="90.0" stroke="#2e2e2e" stroke-width="1.75"/><circle cx="125" cy="83" r="5.2" fill="#fff" stroke="#333" stroke-width="2.6" stroke-dasharray="2.2 1.9"/><circle cx="125" cy="83" r="4" fill="#fff" stroke="#333" stroke-width="1.3"/><circle cx="125" cy="83" r="1.6" fill="none" stroke="#333" stroke-width="1.2"/><polygon points="186.0,65.4 202.2,59.0 215.0,67.3 198.5,73.1" fill="#f5f5f5"/><polygon points="186.0,65.4 198.5,73.1 198.5,91.0 186.0,83.0" fill="#f5f5f5"/><polygon points="198.5,73.1 215.0,67.3 215.0,84.9 198.5,91.0" fill="#f5f5f5"/><polygon points="186.0,65.4 202.2,59.0 215.0,67.3 215.0,84.9 198.5,91.0 186.0,83.0" fill="none" stroke="#2e2e2e" stroke-width="1.75" stroke-linejoin="round"/><polyline points="186.0,65.4 198.5,73.1 215.0,67.3" fill="none" stroke="#2e2e2e" stroke-width="1.75" stroke-linejoin="round"/><line x1="198.5" y1="73.1" x2="198.5" y2="91.0" stroke="#2e2e2e" stroke-width="1.75"/><path d="M208 77 v12 M202 83 h12" stroke="#d9363e" stroke-width="1.8"/><path d="M208 75l-2.6 3h5.2zM208 91l-2.6-3h5.2zM200 83l3-2.6v5.2zM216 83l-3-2.6v5.2z" fill="#d9363e"/><polygon points="233.0,65.4 249.2,59.0 262.0,67.3 245.5,73.1" fill="#f5f5f5"/><polygon points="233.0,65.4 245.5,73.1 245.5,91.0 233.0,83.0" fill="#f5f5f5"/><polygon points="245.5,73.1 262.0,67.3 262.0,84.9 245.5,91.0" fill="#f5f5f5"/><polygon points="233.0,65.4 249.2,59.0 262.0,67.3 262.0,84.9 245.5,91.0 233.0,83.0" fill="none" stroke="#2e2e2e" stroke-width="1.75" stroke-linejoin="round"/><polyline points="233.0,65.4 245.5,73.1 262.0,67.3" fill="none" stroke="#2e2e2e" stroke-width="1.75" stroke-linejoin="round"/><line x1="245.5" y1="73.1" x2="245.5" y2="91.0" stroke="#2e2e2e" stroke-width="1.75"/><circle cx="253" cy="83" r="6" fill="none" stroke="#d9363e" stroke-width="2.2"/><path d="M246 88l4 4 1-5z" fill="#d9363e"/><polygon points="277.0,64.8 289.3,60.0 299.0,66.2 286.5,70.6" fill="#f5f5f5"/><polygon points="277.0,64.8 286.5,70.6 286.5,84.0 277.0,78.0" fill="#f5f5f5"/><polygon points="286.5,70.6 299.0,66.2 299.0,79.4 286.5,84.0" fill="#f5f5f5"/><polygon points="277.0,64.8 289.3,60.0 299.0,66.2 299.0,79.4 286.5,84.0 277.0,78.0" fill="none" stroke="#2e2e2e" stroke-width="1.75" stroke-linejoin="round"/><polyline points="277.0,64.8 286.5,70.6 299.0,66.2" fill="none" stroke="#2e2e2e" stroke-width="1.75" stroke-linejoin="round"/><line x1="286.5" y1="70.6" x2="286.5" y2="84.0" stroke="#2e2e2e" stroke-width="1.75"/><polygon points="295.0,78.2 302.8,75.0 309.0,79.2 301.0,82.0" fill="#f5f5f5"/><polygon points="295.0,78.2 301.0,82.0 301.0,91.0 295.0,87.0" fill="#f5f5f5"/><polygon points="301.0,82.0 309.0,79.2 309.0,88.0 301.0,91.0" fill="#f5f5f5"/><polygon points="295.0,78.2 302.8,75.0 309.0,79.2 309.0,88.0 301.0,91.0 295.0,87.0" fill="none" stroke="#2e2e2e" stroke-width="1.75" stroke-linejoin="round"/><polyline points="295.0,78.2 301.0,82.0 309.0,79.2" fill="none" stroke="#2e2e2e" stroke-width="1.75" stroke-linejoin="round"/><line x1="301.0" y1="82.0" x2="301.0" y2="91.0" stroke="#2e2e2e" stroke-width="1.75"/><path d="M294 59 Q304 58 307 70 L309 67 L308 76 L302 72 L305 71 Q302 64 296 64Z" fill="#2e8be0"/><polygon points="322.0,69.8 329.3,67.0 335.0,70.6 327.6,73.2" fill="#f5f5f5"/><polygon points="322.0,69.8 327.6,73.2 327.6,81.0 322.0,77.5" fill="#f5f5f5"/><polygon points="327.6,73.2 335.0,70.6 335.0,78.3 327.6,81.0" fill="#f5f5f5"/><polygon points="322.0,69.8 329.3,67.0 335.0,70.6 335.0,78.3 327.6,81.0 322.0,77.5" fill="none" stroke="#2e2e2e" stroke-width="1.75" stroke-linejoin="round"/><polyline points="322.0,69.8 327.6,73.2 335.0,70.6" fill="none" stroke="#2e2e2e" stroke-width="1.75" stroke-linejoin="round"/><line x1="327.6" y1="73.2" x2="327.6" y2="81.0" stroke="#2e2e2e" stroke-width="1.75"/><polygon points="340.0,69.8 347.3,67.0 353.0,70.6 345.6,73.2" fill="#f5f5f5"/><polygon points="340.0,69.8 345.6,73.2 345.6,81.0 340.0,77.5" fill="#f5f5f5"/><polygon points="345.6,73.2 353.0,70.6 353.0,78.3 345.6,81.0" fill="#f5f5f5"/><polygon points="340.0,69.8 347.3,67.0 353.0,70.6 353.0,78.3 345.6,81.0 340.0,77.5" fill="none" stroke="#2e2e2e" stroke-width="1.75" stroke-linejoin="round"/><polyline points="340.0,69.8 345.6,73.2 353.0,70.6" fill="none" stroke="#2e2e2e" stroke-width="1.75" stroke-linejoin="round"/><line x1="345.6" y1="73.2" x2="345.6" y2="81.0" stroke="#2e2e2e" stroke-width="1.75"/><line x1="337.5" y1="58" x2="337.5" y2="91" stroke="#4a90d9" stroke-width="1.2" stroke-dasharray="2 2"/><polygon points="380.0,65.6 395.5,59.4 407.7,67.5 407.7,84.5 391.9,90.4 380.0,82.7" fill="#f7fafd"/><polygon points="385.2,65.9 394.9,62.1 402.4,67.0 392.6,70.5" fill="none" stroke="#cfe2f4" stroke-width="2"/><polygon points="382.3,70.3 389.6,74.9 389.6,85.7 382.3,80.9" fill="none" stroke="#cfe2f4" stroke-width="2"/><polygon points="394.9,75.2 404.7,71.8 404.7,82.4 394.9,86.0" fill="none" stroke="#cfe2f4" stroke-width="2"/><polyline points="395.5,59.4 395.5,76.8 407.7,84.5" fill="none" stroke="#2e2e2e" stroke-width="1.5"/><line x1="395.5" y1="76.8" x2="380.0" y2="82.7" stroke="#2e2e2e" stroke-width="1.5"/><polygon points="380.0,65.6 395.5,59.4 407.7,67.5 407.7,84.5 391.9,90.4 380.0,82.7" fill="none" stroke="#2e2e2e" stroke-width="1.9" stroke-linejoin="round"/><polyline points="380.0,65.6 391.9,73.0 407.7,67.5" fill="none" stroke="#2e2e2e" stroke-width="1.9" stroke-linejoin="round"/><line x1="391.9" y1="73.0" x2="391.9" y2="90.4" stroke="#2e2e2e" stroke-width="1.9"/><polygon points="425.0,65.4 440.7,59.0 453.0,67.3 437.0,73.1" fill="#f7f7f7"/><polygon points="425.0,65.4 437.0,73.1 437.0,91.0 425.0,83.0" fill="#f7f7f7"/><polygon points="437.0,73.1 453.0,67.3 453.0,84.9 437.0,91.0" fill="#f7f7f7"/><polygon points="425.0,65.4 440.7,59.0 453.0,67.3 453.0,84.9 437.0,91.0 425.0,83.0" fill="none" stroke="#2e2e2e" stroke-width="1.75" stroke-linejoin="round"/><polyline points="425.0,65.4 437.0,73.1 453.0,67.3" fill="none" stroke="#2e2e2e" stroke-width="1.75" stroke-linejoin="round"/><line x1="437.0" y1="73.1" x2="437.0" y2="91.0" stroke="#2e2e2e" stroke-width="1.75"/><path d="M433 60 L447 91" stroke="#2e8be0" stroke-width="5"/><path d="M433 60 L447 91" stroke="#fff" stroke-width="1.5"/><polygon points="476.0,65.4 492.2,59.0 505.0,67.3 488.5,73.1" fill="#e6eef7"/><polygon points="476.0,65.4 488.5,73.1 488.5,91.0 476.0,83.0" fill="#e6eef7"/><polygon points="488.5,73.1 505.0,67.3 505.0,84.9 488.5,91.0" fill="#e6eef7"/><polygon points="476.0,65.4 492.2,59.0 505.0,67.3 505.0,84.9 488.5,91.0 476.0,83.0" fill="none" stroke="#2e2e2e" stroke-width="1.75" stroke-linejoin="round"/><polyline points="476.0,65.4 488.5,73.1 505.0,67.3" fill="none" stroke="#2e2e2e" stroke-width="1.75" stroke-linejoin="round"/><line x1="488.5" y1="73.1" x2="488.5" y2="91.0" stroke="#2e2e2e" stroke-width="1.75"/><circle cx="495" cy="80" r="6" fill="#cfe2f5" stroke="#333" stroke-width="1.8"/><path d="M478 70 L490 72 L486 82 L479 80Z" fill="#5ba4e6" opacity="0.8"/><polygon points="534.0,65.4 550.2,59.0 563.0,67.3 546.5,73.1" fill="#bfe0fb"/><polygon points="534.0,65.4 546.5,73.1 546.5,91.0 534.0,83.0" fill="#a9d5fa"/><polygon points="546.5,73.1 563.0,67.3 563.0,84.9 546.5,91.0" fill="#95c9f5"/><polygon points="534.0,65.4 550.2,59.0 563.0,67.3 563.0,84.9 546.5,91.0 534.0,83.0" fill="none" stroke="#3d9ae8" stroke-width="2.6" stroke-linejoin="round"/><polyline points="534.0,65.4 546.5,73.1 563.0,67.3" fill="none" stroke="#3d9ae8" stroke-width="2.6" stroke-linejoin="round"/><line x1="546.5" y1="73.1" x2="546.5" y2="91.0" stroke="#3d9ae8" stroke-width="2.6"/><polygon points="541.5,69.4 549.9,66.0 556.5,70.4 548.0,73.5" fill="#d6e9f8"/><polygon points="541.5,69.4 548.0,73.5 548.0,83.0 541.5,78.8" fill="#d6e9f8"/><polygon points="548.0,73.5 556.5,70.4 556.5,79.8 548.0,83.0" fill="#d6e9f8"/><polygon points="541.5,69.4 549.9,66.0 556.5,70.4 556.5,79.8 548.0,83.0 541.5,78.8" fill="none" stroke="#2d3e50" stroke-width="1.4" stroke-linejoin="round"/><polyline points="541.5,69.4 548.0,73.5 556.5,70.4" fill="none" stroke="#2d3e50" stroke-width="1.4" stroke-linejoin="round"/><line x1="548.0" y1="73.5" x2="548.0" y2="83.0" stroke="#2d3e50" stroke-width="1.4"/><polygon points="585,64 599,72 599,91 585,82" fill="#f4f4f4" stroke="#333" stroke-width="2" stroke-linejoin="round"/><polygon points="601.0,62.6 610.0,59.0 617.0,63.7 607.9,66.9" fill="#f5f5f5"/><polygon points="601.0,62.6 607.9,66.9 607.9,77.0 601.0,72.5" fill="#f5f5f5"/><polygon points="607.9,66.9 617.0,63.7 617.0,73.6 607.9,77.0" fill="#f5f5f5"/><polygon points="601.0,62.6 610.0,59.0 617.0,63.7 617.0,73.6 607.9,77.0 601.0,72.5" fill="none" stroke="#2e2e2e" stroke-width="1.75" stroke-linejoin="round"/><polyline points="601.0,62.6 607.9,66.9 617.0,63.7" fill="none" stroke="#2e2e2e" stroke-width="1.75" stroke-linejoin="round"/><line x1="607.9" y1="66.9" x2="607.9" y2="77.0" stroke="#2e2e2e" stroke-width="1.75"/><path d="M602 90 Q605 80 612 80 L610 77 L617 76 L617 84 L614 82 Q609 84 607 90Z" fill="#2e8be0"/><path d="M633 59.5 L640.8 56.3 L648 59.9 L640 63.2Z" fill="#8cc4f2" stroke="#333" stroke-width="1.2" stroke-linejoin="round"/><path d="M633 59.5 L640 63.2 L648 59.9 L648 66.5 L640 70 L633 66.2Z" fill="#a9d3f6"/><path d="M633 66.2 L640 70 L648 66.5" fill="none" stroke="#333" stroke-width="1"/><path d="M633 59.5 L633 74.8 L639.8 77.8 L648 74.5 L648 59.9 M640 63.2 L640 77.8" fill="none" stroke="#333" stroke-width="1.2" stroke-linejoin="round"/><path d="M646.5 78 v-8" stroke="#e02828" stroke-width="1.8"/><path d="M643.6 70.5 l2.9 -4 l2.9 4z" fill="#e02828"/><path d="M631.8 83.8 L641.2 78.7 L650.2 83.8 L640.8 88.4Z" fill="#2f86d8" stroke="#23415e" stroke-width="1.1" stroke-linejoin="round"/><path d="M631.8 94.4 L641 89.7 L649.5 94.8 L640.8 99.1Z" fill="#ececec" stroke="#c8c8c8" stroke-width="1"/><path d="M646.5 99 v-8" stroke="#e02828" stroke-width="1.8"/><path d="M643.6 91.5 l2.9 -4 l2.9 4z" fill="#e02828"/><path d="M633 103.8 L640.8 100.3 L648.7 104.2 L640 108.6Z" fill="#2f86d8" stroke="#23415e" stroke-width="1.1" stroke-linejoin="round"/><path d="M632 106 v9 M649.5 106 v9" stroke="#7fa6c0" stroke-width="1" stroke-dasharray="2 1.6"/><path d="M631.8 114.8 L640 110.5 L650.2 116.8 L641.2 121.1Z" fill="#fff" stroke="#333" stroke-width="1.2" stroke-linejoin="round"/><path d="M762 62 Q759 62 759 66 L759 73 L757 75 L759 77 L759 86 Q759 90 762 90" fill="none" stroke="#b0b0b0" stroke-width="1.5"/><polygon points="773.0,62.6 782.5,59.0 790.0,63.7 780.3,66.9" fill="#f8f8f8"/><polygon points="773.0,62.6 780.3,66.9 780.3,77.0 773.0,72.5" fill="#f8f8f8"/><polygon points="780.3,66.9 790.0,63.7 790.0,73.6 780.3,77.0" fill="#f8f8f8"/><polygon points="773.0,62.6 782.5,59.0 790.0,63.7 790.0,73.6 780.3,77.0 773.0,72.5" fill="none" stroke="#a9a9a9" stroke-width="1.75" stroke-linejoin="round"/><polyline points="773.0,62.6 780.3,66.9 790.0,63.7" fill="none" stroke="#a9a9a9" stroke-width="1.75" stroke-linejoin="round"/><line x1="780.3" y1="66.9" x2="780.3" y2="77.0" stroke="#a9a9a9" stroke-width="1.75"/><polygon points="765.0,74.6 774.5,71.0 782.0,75.7 772.3,78.9" fill="#f8f8f8"/><polygon points="765.0,74.6 772.3,78.9 772.3,89.0 765.0,84.5" fill="#f8f8f8"/><polygon points="772.3,78.9 782.0,75.7 782.0,85.6 772.3,89.0" fill="#f8f8f8"/><polygon points="765.0,74.6 774.5,71.0 782.0,75.7 782.0,85.6 772.3,89.0 765.0,84.5" fill="none" stroke="#a9a9a9" stroke-width="1.75" stroke-linejoin="round"/><polyline points="765.0,74.6 772.3,78.9 782.0,75.7" fill="none" stroke="#a9a9a9" stroke-width="1.75" stroke-linejoin="round"/><line x1="772.3" y1="78.9" x2="772.3" y2="89.0" stroke="#a9a9a9" stroke-width="1.75"/><polygon points="815.0,63.4 826.2,59.0 835.0,64.7 823.6,68.7" fill="#bdbdbd"/><polygon points="815.0,63.4 823.6,68.7 823.6,81.0 815.0,75.5" fill="#bdbdbd"/><polygon points="823.6,68.7 835.0,64.7 835.0,76.8 823.6,81.0" fill="#bdbdbd"/><polygon points="815.0,63.4 826.2,59.0 835.0,64.7 835.0,76.8 823.6,81.0 815.0,75.5" fill="none" stroke="#8f8f8f" stroke-width="1.2" stroke-linejoin="round"/><polyline points="815.0,63.4 823.6,68.7 835.0,64.7" fill="none" stroke="#8f8f8f" stroke-width="1.2" stroke-linejoin="round"/><line x1="823.6" y1="68.7" x2="823.6" y2="81.0" stroke="#8f8f8f" stroke-width="1.2"/><polygon points="803.0,72.4 814.2,68.0 823.0,73.7 811.6,77.7" fill="#b3b3b3"/><polygon points="803.0,72.4 811.6,77.7 811.6,90.0 803.0,84.5" fill="#b3b3b3"/><polygon points="811.6,77.7 823.0,73.7 823.0,85.8 811.6,90.0" fill="#b3b3b3"/><polygon points="803.0,72.4 814.2,68.0 823.0,73.7 823.0,85.8 811.6,90.0 803.0,84.5" fill="none" stroke="#8f8f8f" stroke-width="1.2" stroke-linejoin="round"/><polyline points="803.0,72.4 811.6,77.7 823.0,73.7" fill="none" stroke="#8f8f8f" stroke-width="1.2" stroke-linejoin="round"/><line x1="811.6" y1="77.7" x2="811.6" y2="90.0" stroke="#8f8f8f" stroke-width="1.2"/><polygon points="866.0,62.6 875.5,59.0 883.0,63.7 873.3,66.9" fill="#f5f5f5"/><polygon points="866.0,62.6 873.3,66.9 873.3,77.0 866.0,72.5" fill="#f5f5f5"/><polygon points="873.3,66.9 883.0,63.7 883.0,73.6 873.3,77.0" fill="#f5f5f5"/><polygon points="866.0,62.6 875.5,59.0 883.0,63.7 883.0,73.6 873.3,77.0 866.0,72.5" fill="none" stroke="#2e2e2e" stroke-width="1.75" stroke-linejoin="round"/><polyline points="866.0,62.6 873.3,66.9 883.0,63.7" fill="none" stroke="#2e2e2e" stroke-width="1.75" stroke-linejoin="round"/><line x1="873.3" y1="66.9" x2="873.3" y2="77.0" stroke="#2e2e2e" stroke-width="1.75"/><polygon points="851.0,73.6 860.5,70.0 868.0,74.7 858.3,77.9" fill="#f5f5f5"/><polygon points="851.0,73.6 858.3,77.9 858.3,88.0 851.0,83.5" fill="#f5f5f5"/><polygon points="858.3,77.9 868.0,74.7 868.0,84.6 858.3,88.0" fill="#f5f5f5"/><polygon points="851.0,73.6 860.5,70.0 868.0,74.7 868.0,84.6 858.3,88.0 851.0,83.5" fill="none" stroke="#2e2e2e" stroke-width="1.75" stroke-linejoin="round"/><polyline points="851.0,73.6 858.3,77.9 868.0,74.7" fill="none" stroke="#2e2e2e" stroke-width="1.75" stroke-linejoin="round"/><line x1="858.3" y1="77.9" x2="858.3" y2="88.0" stroke="#2e2e2e" stroke-width="1.75"/><path d="M868 90 Q871 82 878 82 L876 79 L883 79 L883 86 L881 84 Q875 85 873 90Z" fill="#2e8be0"/><polygon points="908.0,65.4 923.7,59.0 936.0,67.3 920.0,73.1" fill="#f5f5f5"/><polygon points="908.0,65.4 920.0,73.1 920.0,91.0 908.0,83.0" fill="#f5f5f5"/><polygon points="920.0,73.1 936.0,67.3 936.0,84.9 920.0,91.0" fill="#f5f5f5"/><polygon points="908.0,65.4 923.7,59.0 936.0,67.3 936.0,84.9 920.0,91.0 908.0,83.0" fill="none" stroke="#2e2e2e" stroke-width="1.75" stroke-linejoin="round"/><polyline points="908.0,65.4 920.0,73.1 936.0,67.3" fill="none" stroke="#2e2e2e" stroke-width="1.75" stroke-linejoin="round"/><line x1="920.0" y1="73.1" x2="920.0" y2="91.0" stroke="#2e2e2e" stroke-width="1.75"/><text x="924" y="84.5" font-size="11" fill="#6aa6dc" font-family="Liberation Sans">A</text><g transform="rotate(-30 974 75)" fill="#fbfbfb" stroke="#2e2e2e" stroke-width="1.5"><rect x="956" y="72" width="13" height="5" rx="2.5"/><ellipse cx="969" cy="74.5" rx="2.6" ry="6"/><rect x="970" y="68.5" width="15" height="12" rx="2"/><rect x="985" y="72" width="5" height="5" rx="2.5"/></g><polygon points="989.5,82.0 986.7,83.5 987.6,86.6 984.5,85.7 983.0,88.5 981.5,85.7 978.4,86.6 979.3,83.5 976.5,82.0 979.3,80.5 978.4,77.4 981.5,78.3 983.0,75.5 984.5,78.3 987.6,77.4 986.7,80.5" fill="#f5a00f"/><polygon points="1041.0,65.3 1056.9,59.0 1069.4,67.2 1053.2,72.8" fill="#d9ebfa"/><polygon points="1041.0,65.3 1053.2,72.8 1053.2,90.4 1041.0,82.5" fill="#8ec2ef"/><polygon points="1053.2,72.8 1069.4,67.2 1069.4,84.4 1053.2,90.4" fill="#3b3b3b"/><polygon points="1041.0,65.3 1056.9,59.0 1069.4,67.2 1069.4,84.4 1053.2,90.4 1041.0,82.5" fill="none" stroke="#2e2e2e" stroke-width="1.75" stroke-linejoin="round"/><polyline points="1041.0,65.3 1053.2,72.8 1069.4,67.2" fill="none" stroke="#2e2e2e" stroke-width="1.75" stroke-linejoin="round"/><line x1="1053.2" y1="72.8" x2="1053.2" y2="90.4" stroke="#2e2e2e" stroke-width="1.75"/><path d="M1056 73 L1067 69 L1067 84 L1056 88Z" fill="#fff"/><circle cx="1061.5" cy="78.5" r="2.6" fill="#ddeefa" stroke="#333" stroke-width="1.4"/><path d="M1058 72v16M1065 70v16M1056 78l11-4" stroke="#333" stroke-width="1.3"/><path d="M1047 65 L1058 62 L1065 66 L1054 70Z" fill="#8ec2ef"/><polygon points="1107.0,65.4 1123.6,59.0 1136.6,67.3 1136.6,84.9 1119.7,91.0 1107.0,83.0" fill="#f7fafd"/><polyline points="1123.6,59.0 1123.6,76.9 1136.6,84.9" fill="none" stroke="#2e2e2e" stroke-width="1.5"/><line x1="1123.6" y1="76.9" x2="1107.0" y2="83.0" stroke="#2e2e2e" stroke-width="1.5"/><polygon points="1107.0,65.4 1123.6,59.0 1136.6,67.3 1136.6,84.9 1119.7,91.0 1107.0,83.0" fill="none" stroke="#2e2e2e" stroke-width="1.9" stroke-linejoin="round"/><polyline points="1107.0,65.4 1119.7,73.1 1136.6,67.3" fill="none" stroke="#2e2e2e" stroke-width="1.9" stroke-linejoin="round"/><line x1="1119.7" y1="73.1" x2="1119.7" y2="91.0" stroke="#2e2e2e" stroke-width="1.9"/><ellipse cx="1121.5" cy="75" rx="10" ry="9.5" fill="none" stroke="#3a93e6" stroke-width="1.7"/><ellipse cx="1121.5" cy="75" rx="4.5" ry="9.5" fill="none" stroke="#3a93e6" stroke-width="1.4"/><path d="M1111.5 75h20M1113 70l17 10" stroke="#3a93e6" stroke-width="1.3"/><polygon points="1171.0,65.4 1187.2,59.0 1200.0,67.3 1183.5,73.1" fill="#fff"/><polygon points="1171.0,65.4 1183.5,73.1 1183.5,91.0 1171.0,83.0" fill="#fff"/><polygon points="1183.5,73.1 1200.0,67.3 1200.0,84.9 1183.5,91.0" fill="#fff"/><polygon points="1171.0,65.4 1187.2,59.0 1200.0,67.3 1200.0,84.9 1183.5,91.0 1171.0,83.0" fill="none" stroke="#2e2e2e" stroke-width="1.75" stroke-linejoin="round"/><polyline points="1171.0,65.4 1183.5,73.1 1200.0,67.3" fill="none" stroke="#2e2e2e" stroke-width="1.75" stroke-linejoin="round"/><line x1="1183.5" y1="73.1" x2="1183.5" y2="91.0" stroke="#2e2e2e" stroke-width="1.75"/><path d="M1172 66 L1186 61 L1199 68 L1186 73Z" fill="none" stroke="#333" stroke-width="1.3"/><path d="M1172 71 L1186 66 L1199 73 L1186 78Z" fill="none" stroke="#333" stroke-width="1.3"/><path d="M1172 76 L1186 71 L1199 78 L1186 83Z" fill="none" stroke="#333" stroke-width="1.3"/><path d="M1172 81 L1186 76 L1199 83 L1186 88Z" fill="none" stroke="#333" stroke-width="1.3"/><ellipse cx="1186" cy="73" rx="7" ry="3" fill="none" stroke="#3a8ee0" stroke-width="1.2"/><polygon points="1244.0,65.4 1260.2,59.0 1273.0,67.3 1256.5,73.1" fill="#fff"/><polygon points="1244.0,65.4 1256.5,73.1 1256.5,91.0 1244.0,83.0" fill="#fff"/><polygon points="1256.5,73.1 1273.0,67.3 1273.0,84.9 1256.5,91.0" fill="#fff"/><polygon points="1244.0,65.4 1260.2,59.0 1273.0,67.3 1273.0,84.9 1256.5,91.0 1244.0,83.0" fill="none" stroke="#2e2e2e" stroke-width="1.75" stroke-linejoin="round"/><polyline points="1244.0,65.4 1256.5,73.1 1273.0,67.3" fill="none" stroke="#2e2e2e" stroke-width="1.75" stroke-linejoin="round"/><line x1="1256.5" y1="73.1" x2="1256.5" y2="91.0" stroke="#2e2e2e" stroke-width="1.75"/><path d="M1258 74 L1261 60 M1258 74 L1245 83 M1258 74 L1272 84" stroke="#2b6cb0" stroke-width="3.5"/><polygon points="1327.0,67.8 1338.8,63.0 1348.0,69.2 1336.0,73.6" fill="#f5f5f5"/><polygon points="1327.0,67.8 1336.0,73.6 1336.0,87.0 1327.0,81.0" fill="#f5f5f5"/><polygon points="1336.0,73.6 1348.0,69.2 1348.0,82.4 1336.0,87.0" fill="#f5f5f5"/><polygon points="1327.0,67.8 1338.8,63.0 1348.0,69.2 1348.0,82.4 1336.0,87.0 1327.0,81.0" fill="none" stroke="#2e2e2e" stroke-width="1.75" stroke-linejoin="round"/><polyline points="1327.0,67.8 1336.0,73.6 1348.0,69.2" fill="none" stroke="#2e2e2e" stroke-width="1.75" stroke-linejoin="round"/><line x1="1336.0" y1="73.6" x2="1336.0" y2="87.0" stroke="#2e2e2e" stroke-width="1.75"/><rect x="1322" y="78" width="5" height="5" fill="#c0313b"/><rect x="1333" y="86" width="5" height="5" fill="#c0313b"/><rect x="1346" y="80" width="5" height="5" fill="#c0313b"/><polygon points="1373.0,71.8 1389.0,67.0 1401.5,73.2 1385.3,77.6" fill="#f5f5f5"/><polygon points="1373.0,71.8 1385.3,77.6 1385.3,91.0 1373.0,85.0" fill="#f5f5f5"/><polygon points="1385.3,77.6 1401.5,73.2 1401.5,86.4 1385.3,91.0" fill="#f5f5f5"/><polygon points="1373.0,71.8 1389.0,67.0 1401.5,73.2 1401.5,86.4 1385.3,91.0 1373.0,85.0" fill="none" stroke="#2e2e2e" stroke-width="1.75" stroke-linejoin="round"/><polyline points="1373.0,71.8 1385.3,77.6 1401.5,73.2" fill="none" stroke="#2e2e2e" stroke-width="1.75" stroke-linejoin="round"/><line x1="1385.3" y1="77.6" x2="1385.3" y2="91.0" stroke="#2e2e2e" stroke-width="1.75"/><polygon points="1380.5,61.5 1388.9,58.7 1395.5,62.3 1387.0,64.9" fill="#f5f5f5"/><polygon points="1380.5,61.5 1387.0,64.9 1387.0,72.7 1380.5,69.2" fill="#f5f5f5"/><polygon points="1387.0,64.9 1395.5,62.3 1395.5,70.0 1387.0,72.7" fill="#f5f5f5"/><polygon points="1380.5,61.5 1388.9,58.7 1395.5,62.3 1395.5,70.0 1387.0,72.7 1380.5,69.2" fill="none" stroke="#2e2e2e" stroke-width="1.75" stroke-linejoin="round"/><polyline points="1380.5,61.5 1387.0,64.9 1395.5,62.3" fill="none" stroke="#2e2e2e" stroke-width="1.75" stroke-linejoin="round"/><line x1="1387.0" y1="64.9" x2="1387.0" y2="72.7" stroke="#2e2e2e" stroke-width="1.75"/><polygon points="1399.5,82.0 1397.2,83.3 1397.9,85.9 1395.3,85.2 1394.0,87.5 1392.7,85.2 1390.1,85.9 1390.8,83.3 1388.5,82.0 1390.8,80.7 1390.1,78.1 1392.7,78.8 1394.0,76.5 1395.3,78.8 1397.9,78.1 1397.2,80.7" fill="#f5a00f"/><text x="1454" y="66" font-size="6.5" font-weight="bold" fill="#a8a8a8" font-family="Liberation Sans">CONCEPT</text><text x="1459" y="72" font-size="6" font-weight="bold" fill="#b5b5b5" font-family="Liberation Sans">LASER</text><path d="M1455 79 L1469 74 L1484 78 L1470 83Z" fill="#e6e6e6" stroke="#b8b8b8" stroke-width="1"/><path d="M1455 79 L1470 83 L1470 90 L1455 86Z" fill="#cfcfcf" stroke="#b0b0b0" stroke-width="1"/><path d="M1470 83 L1484 78 L1484 85 L1470 90Z" fill="#dadada" stroke="#b0b0b0" stroke-width="1"/><path d="M1460 81v7M1465 82v7M1475 81v7" stroke="#bdbdbd" stroke-width="0.8"/></svg>
<svg style="left:0px;top:0px" width="1000" height="180" viewBox="0 0 1000 180"><rect x="4" y="150.0" width="1.6" height="1.6" fill="#222"/><rect x="4" y="153.2" width="1.6" height="1.6" fill="#222"/><rect x="4" y="156.4" width="1.6" height="1.6" fill="#222"/><rect x="4" y="159.6" width="1.6" height="1.6" fill="#222"/><rect x="4" y="162.8" width="1.6" height="1.6" fill="#222"/><rect x="4" y="166.0" width="1.6" height="1.6" fill="#222"/><rect x="4" y="169.2" width="1.6" height="1.6" fill="#222"/><line x1="137.5" y1="147" x2="137.5" y2="173" stroke="#e0e0e0"/><line x1="236.5" y1="147" x2="236.5" y2="173" stroke="#e0e0e0"/><line x1="397.5" y1="147" x2="397.5" y2="173" stroke="#e0e0e0"/><line x1="588.5" y1="147" x2="588.5" y2="173" stroke="#e0e0e0"/><line x1="718.5" y1="147" x2="718.5" y2="173" stroke="#e0e0e0"/><line x1="849.5" y1="147" x2="849.5" y2="173" stroke="#e0e0e0"/><path d="M25 149.6 L15.7 172 L34 169Z" fill="#86c24a" stroke="#2b3d24" stroke-width="1.3"/><path d="M27 161 L35 168 L32 168.5 L34 172 L32 173 L30 169.5 L27 172Z" fill="#333"/><path d="M47 154 L64 149 L64 169 L47 173Z" fill="#86c24a" stroke="#2b3d24" stroke-width="1.3"/><path d="M58 162 L66 169 L63 169.5 L65 173 L63 174 L61 170.5 L58 173Z" fill="#333"/><path d="M76 173 Q76 160 88 157 L96 149 L98 149 L94 165 Q88 172 84 173Z" fill="#86c24a" stroke="#2b3d24" stroke-width="1.3"/><path d="M89 162 L97 169 L94 169.5 L96 173 L94 174 L92 170.5 L89 173Z" fill="#333"/><path d="M113 173 Q106 167 107 160 Q109 150 118 149 Q128 150 129 161 Q129 168 124 173Z" fill="#86c24a" stroke="#2b3d24" stroke-width="1.3"/><path d="M113 152 Q111 162 114 172 M120 150 L120 172" stroke="#2b3d24" stroke-width="1"/><path d="M121 162 L129 169 L126 169.5 L128 173 L126 174 L124 170.5 L121 173Z" fill="#333"/><rect x="143" y="152" width="22" height="17" fill="#86c24a" stroke="#2b3d24" stroke-width="1.3"/><path d="M157 163 L165 171" stroke="#333" stroke-width="4.5" stroke-linecap="round"/><path d="M157 163 L165 171" stroke="#fff" stroke-width="2.5" stroke-linecap="round"/><circle cx="181" cy="166" r="7" fill="#86c24a" stroke="#2b3d24" stroke-width="1.3"/><circle cx="190" cy="157" r="7" fill="#86c24a" stroke="#2b3d24" stroke-width="1.3"/><path d="M187 163 L195 171" stroke="#333" stroke-width="4.5" stroke-linecap="round"/><path d="M187 163 L195 171" stroke="#fff" stroke-width="2.5" stroke-linecap="round"/><path d="M205 173 Q213 172 217 163 Q220 154 227 150" fill="none" stroke="#2b3d24" stroke-width="4"/><path d="M205 173 Q213 172 217 163 Q220 154 227 150" fill="none" stroke="#86c24a" stroke-width="2.2"/><path d="M219 163 L227 171" stroke="#333" stroke-width="4.5" stroke-linecap="round"/><path d="M219 163 L227 171" stroke="#fff" stroke-width="2.5" stroke-linecap="round"/><rect x="242" y="152" width="22" height="17" fill="#86c24a" stroke="#2b3d24" stroke-width="1.3"/><path d="M244 152 L249 169 L254 152 L259 169" fill="none" stroke="#2b3d24" stroke-width="1"/><path d="M256 163 L264 171" stroke="#333" stroke-width="4.5" stroke-linecap="round"/><path d="M256 163 L264 171" stroke="#fff" stroke-width="2.5" stroke-linecap="round"/><circle cx="278" cy="166" r="7" fill="#86c24a" stroke="#2b3d24" stroke-width="1.3"/><circle cx="288" cy="156" r="7" fill="#86c24a" stroke="#2b3d24" stroke-width="1.3"/><path d="M287 163 L295 171" stroke="#333" stroke-width="4.5" stroke-linecap="round"/><path d="M287 163 L295 171" stroke="#fff" stroke-width="2.5" stroke-linecap="round"/><path d="M306 157 L312 150 L318 154 L324 150 L328 160 L323 166 L326 172 L315 170 L307 172 L308 165Z" fill="#86c24a" stroke="#2b3d24" stroke-width="1.3"/><path d="M306 160 L326 168 M312 150 L318 172 M324 150 L309 170" stroke="#2b3d24" stroke-width="0.8"/><path d="M318 163 L326 171" stroke="#333" stroke-width="4.5" stroke-linecap="round"/><path d="M318 163 L326 171" stroke="#fff" stroke-width="2.5" stroke-linecap="round"/><circle cx="348" cy="161" r="11" fill="#86c24a" stroke="#2b3d24" stroke-width="1.3"/><path d="M337 161h22M348 150v22M340 153l16 16M356 153l-16 16" stroke="#2b3d24" stroke-width="0.8"/><path d="M350 163 L358 171" stroke="#333" stroke-width="4.5" stroke-linecap="round"/><path d="M350 163 L358 171" stroke="#fff" stroke-width="2.5" stroke-linecap="round"/><ellipse cx="379" cy="161" rx="8" ry="11" fill="#86c24a" stroke="#2b3d24" stroke-width="1.3"/><path d="M371 161h16M379 150v22M373 154l12 14M385 154l-12 14" stroke="#2b3d24" stroke-width="0.8"/><path d="M381 163 L389 171" stroke="#333" stroke-width="4.5" stroke-linecap="round"/><path d="M381 163 L389 171" stroke="#fff" stroke-width="2.5" stroke-linecap="round"/><polygon points="406.0,154.0 415.5,150.0 423.0,155.2 413.3,158.8" fill="#86c24a"/><polygon points="406.0,154.0 413.3,158.8 413.3,170.0 406.0,165.0" fill="#fff"/><polygon points="413.3,158.8 423.0,155.2 423.0,166.2 413.3,170.0" fill="#fff"/><polygon points="406.0,154.0 415.5,150.0 423.0,155.2 423.0,166.2 413.3,170.0 406.0,165.0" fill="none" stroke="#333" stroke-width="1.3" stroke-linejoin="round"/><polyline points="406.0,154.0 413.3,158.8 423.0,155.2" fill="none" stroke="#333" stroke-width="1.3" stroke-linejoin="round"/><line x1="413.3" y1="158.8" x2="413.3" y2="170.0" stroke="#333" stroke-width="1.3"/><path d="M417 162 L425 169 L422 169.5 L424 173 L422 174 L420 170.5 L417 173Z" fill="#333"/><polygon points="437.0,154.0 446.5,150.0 454.0,155.2 444.3,158.8" fill="#fff"/><polygon points="437.0,154.0 444.3,158.8 444.3,170.0 437.0,165.0" fill="#86c24a"/><polygon points="444.3,158.8 454.0,155.2 454.0,166.2 444.3,170.0" fill="#86c24a"/><polygon points="437.0,154.0 446.5,150.0 454.0,155.2 454.0,166.2 444.3,170.0 437.0,165.0" fill="none" stroke="#333" stroke-width="1.3" stroke-linejoin="round"/><polyline points="437.0,154.0 444.3,158.8 454.0,155.2" fill="none" stroke="#333" stroke-width="1.3" stroke-linejoin="round"/><line x1="444.3" y1="158.8" x2="444.3" y2="170.0" stroke="#333" stroke-width="1.3"/><path d="M448 162 L456 169 L453 169.5 L455 173 L453 174 L451 170.5 L448 173Z" fill="#333"/><polygon points="468.0,154.0 477.5,150.0 485.0,155.2 475.3,158.8" fill="#f5a623"/><polygon points="468.0,154.0 475.3,158.8 475.3,170.0 468.0,165.0" fill="#2f86d8"/><polygon points="475.3,158.8 485.0,155.2 485.0,166.2 475.3,170.0" fill="#86c24a"/><polygon points="468.0,154.0 477.5,150.0 485.0,155.2 485.0,166.2 475.3,170.0 468.0,165.0" fill="none" stroke="#333" stroke-width="1.3" stroke-linejoin="round"/><polyline points="468.0,154.0 475.3,158.8 485.0,155.2" fill="none" stroke="#333" stroke-width="1.3" stroke-linejoin="round"/><line x1="475.3" y1="158.8" x2="475.3" y2="170.0" stroke="#333" stroke-width="1.3"/><path d="M479 162 L487 169 L484 169.5 L486 173 L484 174 L482 170.5 L479 173Z" fill="#333"/><polygon points="499.0,154.0 508.5,150.0 516.0,155.2 506.3,158.8" fill="#fff"/><polygon points="499.0,154.0 506.3,158.8 506.3,170.0 499.0,165.0" fill="#fff"/><polygon points="506.3,158.8 516.0,155.2 516.0,166.2 506.3,170.0" fill="#fff"/><polygon points="499.0,154.0 508.5,150.0 516.0,155.2 516.0,166.2 506.3,170.0 499.0,165.0" fill="none" stroke="#b5b5b5" stroke-width="1.3" stroke-linejoin="round"/><polyline points="499.0,154.0 506.3,158.8 516.0,155.2" fill="none" stroke="#b5b5b5" stroke-width="1.3" stroke-linejoin="round"/><line x1="506.3" y1="158.8" x2="506.3" y2="170.0" stroke="#b5b5b5" stroke-width="1.3"/><path d="M510 162 L518 169 L515 169.5 L517 173 L515 174 L513 170.5 L510 173Z" fill="#b0b0b0"/><polygon points="530.0,154.0 539.5,150.0 547.0,155.2 537.3,158.8" fill="#fff"/><polygon points="530.0,154.0 537.3,158.8 537.3,170.0 530.0,165.0" fill="#fff"/><polygon points="537.3,158.8 547.0,155.2 547.0,166.2 537.3,170.0" fill="#fff"/><polygon points="530.0,154.0 539.5,150.0 547.0,155.2 547.0,166.2 537.3,170.0 530.0,165.0" fill="none" stroke="#333" stroke-width="1.3" stroke-linejoin="round"/><polyline points="530.0,154.0 537.3,158.8 547.0,155.2" fill="none" stroke="#333" stroke-width="1.3" stroke-linejoin="round"/><line x1="537.3" y1="158.8" x2="537.3" y2="170.0" stroke="#333" stroke-width="1.3"/><path d="M535 161 L543 161 L539 167Z" fill="#d82a2a"/><path d="M541 162 L549 169 L546 169.5 L548 173 L546 174 L544 170.5 L541 173Z" fill="#333"/><polygon points="561.0,154.0 570.5,150.0 578.0,155.2 568.3,158.8" fill="#86c24a"/><polygon points="561.0,154.0 568.3,158.8 568.3,170.0 561.0,165.0" fill="#86c24a"/><polygon points="568.3,158.8 578.0,155.2 578.0,166.2 568.3,170.0" fill="#86c24a"/><polygon points="561.0,154.0 570.5,150.0 578.0,155.2 578.0,166.2 568.3,170.0 561.0,165.0" fill="none" stroke="#333" stroke-width="1.3" stroke-linejoin="round"/><polyline points="561.0,154.0 568.3,158.8 578.0,155.2" fill="none" stroke="#333" stroke-width="1.3" stroke-linejoin="round"/><line x1="568.3" y1="158.8" x2="568.3" y2="170.0" stroke="#333" stroke-width="1.3"/><path d="M572 162 L580 169 L577 169.5 L579 173 L577 174 L575 170.5 L572 173Z" fill="#333"/><path d="M607 149.6 L597.2 172.5 L615.5 169.9Z" fill="#c9c9c9" stroke="#9a9a9a" stroke-width="1.3"/><path d="M609.5 161 L617.5 168 L614.5 168.5 L616.5 172 L614.5 173 L612.5 169.5 L609.5 172Z" fill="#8a8a8a"/><path d="M638.4 149.6 L628 172.5 L645 170Z" fill="#c9c9c9" stroke="#9a9a9a" stroke-width="1.3"/><path d="M637.5 156 L631.5 169.5 L641 168Z" fill="none" stroke="#a8a8a8" stroke-width="1"/><path d="M639 162 L644 154 L642 151 L648 150 L647 156 L645 154 L641 164Z" fill="#bdbdbd"/><path d="M669.2 149.6 L659.4 172.5 L676 170Z" fill="#c9c9c9" stroke="#9a9a9a" stroke-width="1.3"/><path d="M668.5 156 L662.5 169.5 L672 168Z" fill="none" stroke="#a8a8a8" stroke-width="1"/><path d="M671 163 L677 155 L675 153 L681 150 L681 157 L679 156 L673 165Z" fill="#b5b5b5"/><path d="M698 149.6 L688.2 172.5 L700 171Z" fill="#c4c4c4" stroke="#3a3a4a" stroke-width="1.2"/><path d="M702.6 149.6 L693.4 172.5 L708.5 169.2Z" fill="#86c24a" stroke="#2b3d24" stroke-width="1.3"/><path d="M703 163 l4 -3 l4 1 l0 4 l-3 -1 M712 168 l-3 4 l-5 -1 l1 -3 l2 1" fill="#2f8be0" stroke="#2f8be0" stroke-width="2"/><path d="M736.6 149.6 L727.4 172.5 L744.5 168.6Z" fill="#86c24a" stroke="#2b3d24" stroke-width="1.4"/><path d="M738.5 162 L748 172 M748 162 L738.5 172" stroke="#e03a3a" stroke-width="2.8"/><path d="M770 149 L760 173 L778 170Z" fill="#c9c9c9" stroke="#9a9a9a" stroke-width="1.2" stroke-dasharray="2 1"/><path d="M799 149 L790 173 L806 170Z" fill="#c9c9c9" stroke="#9a9a9a" stroke-width="1.2"/><rect x="799" y="163" width="8" height="9" fill="#eee" stroke="#888" stroke-width="0.8"/><path d="M822 150 L842 150 L835 173 L818 173Z" fill="#c9c9c9" stroke="#9a9a9a" stroke-width="1.2"/><path d="M867 150 L858 173 L872 171Z" fill="#fff" stroke="#999" stroke-width="1.2"/><ellipse cx="871" cy="168" rx="5" ry="3" fill="#ccc"/><path d="M893 150 L886 173 L895 171Z" fill="#fff" stroke="#555" stroke-width="1.2"/><path d="M898 150 L889 173 L905 170Z" fill="#ddd" stroke="#555" stroke-width="1.2"/><ellipse cx="902" cy="168" rx="5" ry="3" fill="#2f8be0"/><path d="M900 149 q6 0 6 6" stroke="#2f8be0" stroke-width="2.5" fill="none"/><path d="M929 150 L920 173 L936 170Z" fill="#c7c7c7" stroke="#444" stroke-width="1.2"/><ellipse cx="933" cy="168" rx="5" ry="3" fill="#2f8be0"/><path d="M952 151 L972 151 L966 173 L949 173Z" fill="#c9c9c9" stroke="#9a9a9a" stroke-width="1.5"/><ellipse cx="965" cy="168" rx="5" ry="3" fill="#ddd"/></svg>
<svg style="left:0px;top:0px" width="1528" height="1035" viewBox="0 0 1528 1035"><defs><linearGradient id="rg" x1="0" y1="0" x2="0" y2="1"><stop offset="0" stop-color="#f0f8ff"/><stop offset="0.72" stop-color="#cfe5fa"/><stop offset="0.8" stop-color="#bfe0fd"/><stop offset="0.9" stop-color="#c8e3fb"/><stop offset="1" stop-color="#b8ddfd"/></linearGradient></defs><rect x="0" y="985" width="1528" height="37" fill="url(#rg)"/><rect x="0" y="985.6" width="1528" height="1.3" fill="#4a545e"/><path d="M0.8 986v14M12.3 986v5M23.8 986v5M35.3 986v5M46.8 986v5M58.3 986v9M69.8 986v5M81.3 986v5M92.8 986v5M104.4 986v5M115.9 986v14M127.4 986v5M138.9 986v5M150.4 986v5M161.9 986v5M173.4 986v9M184.9 986v5M196.4 986v5M207.9 986v5M219.4 986v5M230.9 986v14M242.4 986v5M253.9 986v5M265.4 986v5M276.9 986v5M288.4 986v9M300.0 986v5M311.5 986v5M323.0 986v5M334.5 986v5M346.0 986v14M357.5 986v5M369.0 986v5M380.5 986v5M392.0 986v5M403.5 986v9M415.0 986v5M426.5 986v5M438.0 986v5M449.5 986v5M461.0 986v14M472.5 986v5M484.1 986v5M495.6 986v5M507.1 986v5M518.6 986v9M530.1 986v5M541.6 986v5M553.1 986v5M564.6 986v5M576.1 986v14M587.6 986v5M599.1 986v5M610.6 986v5M622.1 986v5M633.6 986v9M645.1 986v5M656.6 986v5M668.1 986v5M679.7 986v5M691.2 986v14M702.7 986v5M714.2 986v5M725.7 986v5M737.2 986v5M748.7 986v9M760.2 986v5M771.7 986v5M783.2 986v5M794.7 986v5M806.2 986v14M817.7 986v5M829.2 986v5M840.7 986v5M852.2 986v5M863.8 986v9M875.3 986v5M886.8 986v5M898.3 986v5M909.8 986v5M921.3 986v14M932.8 986v5M944.3 986v5M955.8 986v5M967.3 986v5M978.8 986v9M990.3 986v5M1001.8 986v5M1013.3 986v5M1024.8 986v5M1036.3 986v14M1047.8 986v5M1059.4 986v5M1070.9 986v5M1082.4 986v5M1093.9 986v9M1105.4 986v5M1116.9 986v5M1128.4 986v5M1139.9 986v5M1151.4 986v14M1162.9 986v5M1174.4 986v5M1185.9 986v5M1197.4 986v5M1208.9 986v9M1220.4 986v5M1231.9 986v5M1243.4 986v5M1255.0 986v5M1266.5 986v14M1278.0 986v5M1289.5 986v5M1301.0 986v5M1312.5 986v5M1324.0 986v9M1335.5 986v5M1347.0 986v5M1358.5 986v5M1370.0 986v5M1381.5 986v14M1393.0 986v5M1404.5 986v5M1416.0 986v5M1427.5 986v5M1439.0 986v9M1450.6 986v5M1462.1 986v5M1473.6 986v5" stroke="#4a4a4a" stroke-width="1.1"/><rect x="0" y="1022" width="1528" height="13" fill="#2896fe"/><rect x="0" y="1022" width="1528" height="1" fill="#3191e6"/><path d="M1421.5 798 L1421.5 878.5" stroke="#64c45a" stroke-width="1.2"/><path d="M1421.5 878.5 L1502 878" stroke="#d02e3c" stroke-width="1.2"/><path d="M1421 793 L1425.5 798 L1430 793 M1425.5 798 L1425.5 802" stroke="#8fcc86" stroke-width="1" fill="none"/><path d="M1419.5 873.5 L1426 873.5 L1419.5 882.5 L1426 882.5" stroke="#3a62c0" stroke-width="1.1" fill="none"/><path d="M1510 881 L1518.5 891 M1518.5 881 L1510 891" stroke="#c83040" stroke-width="1.2"/></svg>
<span class="a" style="left:866.50px;top:9.22px;font-size:11.5px;line-height:11.5px;color:#1a1a1a;transform:scaleX(0.9924)">Materialise Magics 22.03 - Stl new.stl</span>
<span class="a" style="left:417.50px;top:9.22px;font-size:11.5px;line-height:11.5px;color:#6e6e6e;transform:scaleX(0.9657)">Quick search (Shift+Q)</span>
<span class="a" style="left:16.50px;top:35.73px;font-size:11.5px;line-height:11.5px;color:#ffffff;transform:scaleX(0.7962)">FILE</span>
<span class="a" style="left:65.80px;top:36.23px;font-size:11.5px;line-height:11.5px;color:#3d5670;transform:scaleX(0.8874)">TOOLS</span>
<span class="a" style="left:123.60px;top:36.23px;font-size:11.5px;line-height:11.5px;color:#222222;transform:scaleX(0.7739)">FIX</span>
<span class="a" style="left:160.00px;top:36.23px;font-size:11.5px;line-height:11.5px;color:#222222;transform:scaleX(0.8315)">TEXTURE</span>
<span class="a" style="left:227.20px;top:36.23px;font-size:11.5px;line-height:11.5px;color:#222222;transform:scaleX(0.9058)">POSITION</span>
<span class="a" style="left:299.80px;top:36.23px;font-size:11.5px;line-height:11.5px;color:#222222;transform:scaleX(0.8665)">BUILD PREPARATION</span>
<span class="a" style="left:424.70px;top:36.23px;font-size:11.5px;line-height:11.5px;color:#222222;transform:scaleX(0.8752)">SUPPORT GENERATION</span>
<span class="a" style="left:568.00px;top:36.23px;font-size:11.5px;line-height:11.5px;color:#222222;transform:scaleX(0.8667)">ANALYZE &amp; REPORT</span>
<span class="a" style="left:694.00px;top:36.23px;font-size:11.5px;line-height:11.5px;color:#222222;transform:scaleX(0.8531)">SLICING</span>
<span class="a" style="left:756.20px;top:36.23px;font-size:11.5px;line-height:11.5px;color:#222222;transform:scaleX(0.9074)">VIEW</span>
<span class="a" style="left:809.90px;top:36.23px;font-size:11.5px;line-height:11.5px;color:#222222;transform:scaleX(0.9014)">OPTIONS &amp; HELP</span>
<span class="a" style="left:10.60px;top:96.22px;font-size:11.5px;line-height:11.5px;color:#383838;transform:scaleX(0.9320)">Create</span>
<span class="a" style="left:50.60px;top:96.22px;font-size:11.5px;line-height:11.5px;color:#383838">Duplicate</span>
<span class="a" style="left:119.50px;top:96.22px;font-size:11.5px;line-height:11.5px;color:#383838;transform:scaleX(0.9134)">Batch</span>
<span class="a" style="left:109.50px;top:108.72px;font-size:11.5px;line-height:11.5px;color:#383838">Duplicate</span>
<span class="a" style="left:70.70px;top:125.72px;font-size:11.5px;line-height:11.5px;color:#474747;transform:scaleX(0.9320)">Create</span>
<span class="a" style="left:177.30px;top:96.22px;font-size:11.5px;line-height:11.5px;color:#383838;transform:scaleX(0.9530)">Translate</span>
<span class="a" style="left:230.60px;top:96.22px;font-size:11.5px;line-height:11.5px;color:#383838;transform:scaleX(0.9795)">Rotate</span>
<span class="a" style="left:274.50px;top:96.22px;font-size:11.5px;line-height:11.5px;color:#383838;transform:scaleX(0.8991)">Rescale</span>
<span class="a" style="left:322.40px;top:96.22px;font-size:11.5px;line-height:11.5px;letter-spacing:0.222px;color:#383838">Mirror</span>
<span class="a" style="left:247.80px;top:125.72px;font-size:11.5px;line-height:11.5px;color:#474747">Position</span>
<span class="a" style="left:376.40px;top:96.22px;font-size:11.5px;line-height:11.5px;letter-spacing:0.279px;color:#383838">Hollow</span>
<span class="a" style="left:384.60px;top:108.72px;font-size:11.5px;line-height:11.5px;color:#383838;transform:scaleX(0.8769)">Part</span>
<span class="a" style="left:423.90px;top:96.22px;font-size:11.5px;line-height:11.5px;color:#383838;transform:scaleX(0.9845)">Cut or</span>
<span class="a" style="left:423.90px;top:108.72px;font-size:11.5px;line-height:11.5px;color:#383838;transform:scaleX(0.9500)">Punch</span>
<span class="a" style="left:465.80px;top:96.22px;font-size:11.5px;line-height:11.5px;color:#383838;transform:scaleX(0.9941)">Perforator</span>
<span class="a" style="left:527.50px;top:96.22px;font-size:11.5px;line-height:11.5px;letter-spacing:0.172px;color:#383838">Hull and</span>
<span class="a" style="left:537.40px;top:108.72px;font-size:11.5px;line-height:11.5px;color:#383838;transform:scaleX(0.9213)">Core</span>
<span class="a" style="left:582.90px;top:96.22px;font-size:11.5px;line-height:11.5px;color:#383838;transform:scaleX(0.9252)">Surface</span>
<span class="a" style="left:581.80px;top:108.72px;font-size:11.5px;line-height:11.5px;letter-spacing:0.077px;color:#383838">to Solid</span>
<span class="a" style="left:547.50px;top:125.72px;font-size:11.5px;line-height:11.5px;color:#474747;transform:scaleX(0.9262)">Edit</span>
<span class="a" style="left:656.60px;top:62.63px;font-size:11.5px;line-height:11.5px;color:#383838;transform:scaleX(0.9634)">Extrude</span>
<span class="a" style="left:656.60px;top:85.02px;font-size:11.5px;line-height:11.5px;color:#383838;transform:scaleX(0.9913)">Offset</span>
<span class="a" style="left:656.60px;top:106.62px;font-size:11.5px;line-height:11.5px;letter-spacing:0.249px;color:#383838">Milling Offset</span>
<span class="a" style="left:758.30px;top:96.22px;font-size:11.5px;line-height:11.5px;color:#a7a7a7">Merge</span>
<span class="a" style="left:762.40px;top:108.72px;font-size:11.5px;line-height:11.5px;color:#a7a7a7;transform:scaleX(0.8785)">Parts</span>
<span class="a" style="left:798.60px;top:96.22px;font-size:11.5px;line-height:11.5px;color:#a7a7a7;transform:scaleX(0.9735)">Boolean</span>
<span class="a" style="left:852.10px;top:96.22px;font-size:11.5px;line-height:11.5px;color:#383838;transform:scaleX(0.9312)">Shells</span>
<span class="a" style="left:847.20px;top:108.72px;font-size:11.5px;line-height:11.5px;color:#383838;transform:scaleX(0.9191)">To Parts</span>
<span class="a" style="left:780.00px;top:125.72px;font-size:11.5px;line-height:11.5px;color:#474747">Merge &amp; Boolean</span>
<span class="a" style="left:908.20px;top:96.22px;font-size:11.5px;line-height:11.5px;color:#383838;transform:scaleX(0.9571)">Label</span>
<span class="a" style="left:962.00px;top:96.22px;font-size:11.5px;line-height:11.5px;color:#383838;transform:scaleX(0.9709)">Prop</span>
<span class="a" style="left:945.60px;top:108.72px;font-size:11.5px;line-height:11.5px;letter-spacing:0.033px;color:#383838">Generation</span>
<span class="a" style="left:934.60px;top:125.72px;font-size:11.5px;line-height:11.5px;color:#474747;transform:scaleX(0.9631)">Generate</span>
<span class="a" style="left:1025.70px;top:96.22px;font-size:11.5px;line-height:11.5px;color:#383838;transform:scaleX(0.9825)">Honeycomb</span>
<span class="a" style="left:1029.60px;top:108.72px;font-size:11.5px;line-height:11.5px;color:#383838;transform:scaleX(0.9628)">Structures</span>
<span class="a" style="left:1096.40px;top:96.22px;font-size:11.5px;line-height:11.5px;color:#383838;transform:scaleX(0.9685)">Structures</span>
<span class="a" style="left:1158.20px;top:96.22px;font-size:11.5px;line-height:11.5px;color:#383838;transform:scaleX(0.9116)">Slice Based</span>
<span class="a" style="left:1160.20px;top:108.72px;font-size:11.5px;line-height:11.5px;color:#383838;transform:scaleX(0.9704)">Structures</span>
<span class="a" style="left:1224.40px;top:96.22px;font-size:11.5px;line-height:11.5px;color:#383838;transform:scaleX(0.9423)">DSM Somos®</span>
<span class="a" style="left:1230.00px;top:108.72px;font-size:11.5px;line-height:11.5px;color:#383838;transform:scaleX(0.9618)">TetraShell™</span>
<span class="a" style="left:1135.70px;top:125.72px;font-size:11.5px;line-height:11.5px;color:#474747;transform:scaleX(0.9685)">Structures</span>
<span class="a" style="left:1317.60px;top:96.22px;font-size:11.5px;line-height:11.5px;letter-spacing:0.072px;color:#383838">Rapidfit</span>
<span class="a" style="left:1368.70px;top:96.22px;font-size:11.5px;line-height:11.5px;color:#383838;transform:scaleX(0.9404)">FormFit</span>
<span class="a" style="left:1342.50px;top:125.72px;font-size:11.5px;line-height:11.5px;color:#474747;transform:scaleX(0.9763)">Fit2Ship</span>
<span class="a" style="left:1429.60px;top:96.22px;font-size:11.5px;line-height:11.5px;color:#a7a7a7;transform:scaleX(0.9538)">Remove Volume</span>
<span class="a" style="left:1452.20px;top:108.72px;font-size:11.5px;line-height:11.5px;color:#a7a7a7;transform:scaleX(0.9722)">Wizard</span>
<span class="a" style="left:1435.80px;top:125.72px;font-size:11.5px;line-height:11.5px;color:#474747;transform:scaleX(0.9458)">Concept Laser</span>
<span class="a" style="left:2.50px;top:1004.52px;font-size:13.5px;line-height:13.5px;color:#000;transform:scaleX(0.8143)">0</span>
<span class="a" style="left:110.36px;top:1004.52px;font-size:13.5px;line-height:13.5px;color:#000">1</span>
<span class="a" style="left:226.42px;top:1004.52px;font-size:13.5px;line-height:13.5px;color:#000;transform:scaleX(0.8571)">2</span>
<span class="a" style="left:341.48px;top:1004.52px;font-size:13.5px;line-height:13.5px;color:#000;transform:scaleX(0.8571)">3</span>
<span class="a" style="left:456.54px;top:1004.52px;font-size:13.5px;line-height:13.5px;color:#000;transform:scaleX(0.7500)">4</span>
<span class="a" style="left:571.60px;top:1004.52px;font-size:13.5px;line-height:13.5px;color:#000;transform:scaleX(0.8571)">5</span>
<span class="a" style="left:686.66px;top:1004.52px;font-size:13.5px;line-height:13.5px;color:#000;transform:scaleX(0.8571)">6</span>
<span class="a" style="left:801.72px;top:1004.52px;font-size:13.5px;line-height:13.5px;color:#000;transform:scaleX(0.8571)">7</span>
<span class="a" style="left:916.78px;top:1004.52px;font-size:13.5px;line-height:13.5px;color:#000;transform:scaleX(0.8571)">8</span>
<span class="a" style="left:1031.84px;top:1004.52px;font-size:13.5px;line-height:13.5px;color:#000;transform:scaleX(0.8571)">9</span>
<span class="a" style="left:1142.44px;top:1004.52px;font-size:13.5px;line-height:13.5px;color:#000;transform:scaleX(0.9624)">10</span>
<span class="a" style="left:1257.46px;top:1004.52px;font-size:13.5px;line-height:13.5px;letter-spacing:0.494px;color:#000">11</span>
<span class="a" style="left:1372.56px;top:1004.52px;font-size:13.5px;line-height:13.5px;color:#000;transform:scaleX(0.9624)">12</span>
<span class="a" style="left:1500.00px;top:999.38px;font-size:12.5px;line-height:12.5px;letter-spacing:1.250px;color:#111">cm</span>
<span class="a" style="left:7.00px;top:1026.72px;font-size:11.5px;line-height:11.5px;color:#d2eeff;transform:scaleX(0.8957)">Ready</span>

<div class="b" style="left:663px;top:298px;width:616px;height:541px;box-shadow:0 4px 22px 4px rgba(40,70,110,.38)"></div>
<div class="b" style="left:663px;top:298px;width:616px;height:541px;background:#f0f0f0;border:1px solid #5f7386"></div>
<div class="b" style="left:664px;top:299px;width:614px;height:30px;background:#fff"></div>
<div class="b" style="left:668px;top:333px;width:121px;height:504px;background:#fff;border:1px solid;border-color:#8a8a8a #8a8a8a #8a8a8a #8a8a8a"></div>
<div class="b" style="left:670px;top:335px;width:118px;height:501px;border-left:1px solid #646464;border-top:1px solid #646464;border-right:1px solid #7a7a7a;border-bottom:1px solid #7a7a7a"></div>
<div class="b" style="left:695px;top:337px;width:88px;height:20px;background:#ececec"></div>
<div class="b" style="left:671px;top:388px;width:112px;height:1px;background:#a0a0a0"></div>
<div class="b" style="left:671px;top:556px;width:112px;height:1px;background:#a0a0a0"></div>
<div class="b" style="left:874px;top:333px;width:350px;height:21px;background:#e1e1e1;border:1px solid #adadad"></div>
<div class="b" style="left:1229px;top:334px;width:44px;height:22px;background:#cccccc"></div>
<div class="b" style="left:797px;top:365px;width:474px;height:382px;background:#f7f7f7;border:1px solid #a7a7a7;border-radius:3px;border-color:#a9a9a9 #e2e2e2 #a9a9a9 #a9a9a9"></div>
<div class="b" style="left:798px;top:366px;width:472px;height:380px;background:linear-gradient(#fbfbfb,#f0f0f0 40%,#f0f0f0)"></div>
<div class="b" style="left:807px;top:391px;width:453px;height:69px;border:1px solid #dcdcdc;background:#fafafa"></div>
<div class="b" style="left:814px;top:388px;width:38px;height:8px;background:#fafafa"></div>
<div class="b" style="left:1234px;top:405px;width:15px;height:45px;background:#ececec"></div>
<div class="b" style="left:807px;top:471px;width:453px;height:264px;border:1px solid #dcdcdc"></div>
<div class="b" style="left:814px;top:468px;width:64px;height:8px;background:#f3f3f3"></div>
<div class="b" style="left:1139px;top:703px;width:111px;height:24px;background:#e5e5e5;border:2px solid #2a6db5"></div>
<div class="b" style="left:1142px;top:706px;width:105px;height:18px;border:1px dotted #222"></div>
<div class="b" style="left:979px;top:812px;width:150px;height:25px;background:#e1e1e1;border:1px solid #adadad"></div>
<div class="b" style="left:1135px;top:812px;width:58px;height:24px;background:#e1e1e1;border:1px solid #adadad"></div>
<div class="b" style="left:1200px;top:812px;width:58px;height:24px;background:#e1e1e1;border:1px solid #adadad"></div>

<svg style="left:0px;top:0px" width="1528" height="1035" viewBox="0 0 1528 1035"><path d="M677 306 h6 v5 h5 v6 h-5 v4 h-6 v-4 h-5 v-6 h5z" fill="#e5161d" transform="rotate(-8 680 313)"/><path d="M1158.5 313.5 h10.5" stroke="#111" stroke-width="1.1"/><rect x="1204.5" y="308.5" width="9" height="9" fill="none" stroke="#c8c8c8"/><path d="M1250 308.5 L1260 318.5 M1260 308.5 L1250 318.5" stroke="#111" stroke-width="1.1"/><path d="M1211 342 L1215 346 L1219 342" fill="none" stroke="#333" stroke-width="1.2"/><path d="M1238 413 L1241.5 409.5 L1245 413" fill="none" stroke="#b0b0b0" stroke-width="1.2"/><path d="M1238 442 L1241.5 445.5 L1245 442" fill="none" stroke="#b0b0b0" stroke-width="1.2"/><circle cx="688" cy="342" r="5.5" fill="#9cc8f0" stroke="#4f7fb5" stroke-width="1.3"/><path d="M684 346 L676 354" stroke="#8a8a6a" stroke-width="3" stroke-linecap="round"/><path d="M683 360 L693 358 L694 371 L684 373Z" fill="#dfe8f7" stroke="#8d9cc0" stroke-width="0.9"/><path d="M681 362 L691 360 L692 373 L682 375Z" fill="#d5e1f5" stroke="#8d9cc0" stroke-width="0.9"/><path d="M678 364 L688 362 L689 376 L679 378Z" fill="#c8d8f2" stroke="#7f90b8" stroke-width="0.9"/><polygon points="675.0,403.8 685.1,400.0 693.0,404.9 682.7,408.4" fill="#e8e8f6"/><polygon points="675.0,403.8 682.7,408.4 682.7,419.0 675.0,414.2" fill="#dcdcf2"/><polygon points="682.7,408.4 693.0,404.9 693.0,415.4 682.7,419.0" fill="#d0262e"/><polygon points="675.0,403.8 685.1,400.0 693.0,404.9 693.0,415.4 682.7,419.0 675.0,414.2" fill="none" stroke="#6b6b9c" stroke-width="1" stroke-linejoin="round"/><polyline points="675.0,403.8 682.7,408.4 693.0,404.9" fill="none" stroke="#6b6b9c" stroke-width="1" stroke-linejoin="round"/><line x1="682.7" y1="408.4" x2="682.7" y2="419.0" stroke="#6b6b9c" stroke-width="1"/><polygon points="675.0,424.8 685.1,421.0 693.0,425.9 682.7,429.4" fill="#e8e8f6"/><polygon points="675.0,424.8 682.7,429.4 682.7,440.0 675.0,435.2" fill="#d8dcf2"/><polygon points="682.7,429.4 693.0,425.9 693.0,436.4 682.7,440.0" fill="#9098d8"/><polygon points="675.0,424.8 685.1,421.0 693.0,425.9 693.0,436.4 682.7,440.0 675.0,435.2" fill="none" stroke="#6b6b9c" stroke-width="1" stroke-linejoin="round"/><polyline points="675.0,424.8 682.7,429.4 693.0,425.9" fill="none" stroke="#6b6b9c" stroke-width="1" stroke-linejoin="round"/><line x1="682.7" y1="429.4" x2="682.7" y2="440.0" stroke="#6b6b9c" stroke-width="1"/><path d="M684 425 L692 422" stroke="#e8d04a" stroke-width="2"/><polygon points="675.0,445.8 685.1,442.0 693.0,446.9 682.7,450.4" fill="#d8daf0"/><polygon points="675.0,445.8 682.7,450.4 682.7,461.0 675.0,456.2" fill="#c8cce8"/><polygon points="682.7,450.4 693.0,446.9 693.0,457.4 682.7,461.0" fill="#9aa0d8"/><polygon points="675.0,445.8 685.1,442.0 693.0,446.9 693.0,457.4 682.7,461.0 675.0,456.2" fill="none" stroke="#6b6b9c" stroke-width="1" stroke-linejoin="round"/><polyline points="675.0,445.8 682.7,450.4 693.0,446.9" fill="none" stroke="#6b6b9c" stroke-width="1" stroke-linejoin="round"/><line x1="682.7" y1="450.4" x2="682.7" y2="461.0" stroke="#6b6b9c" stroke-width="1"/><circle cx="681" cy="452" r="1.3" fill="#222"/><circle cx="686" cy="456" r="1.3" fill="#222"/><circle cx="690" cy="449" r="1.3" fill="#222"/><circle cx="683" cy="446" r="1.2" fill="#222"/><circle cx="690" cy="457" r="1.2" fill="#222"/><polygon points="675.0,466.8 685.1,463.0 693.0,467.9 682.7,471.4" fill="#c8202e"/><polygon points="675.0,466.8 682.7,471.4 682.7,482.0 675.0,477.2" fill="#dcdcf2"/><polygon points="682.7,471.4 693.0,467.9 693.0,478.4 682.7,482.0" fill="#9098d8"/><polygon points="675.0,466.8 685.1,463.0 693.0,467.9 693.0,478.4 682.7,482.0 675.0,477.2" fill="none" stroke="#6b6b9c" stroke-width="1" stroke-linejoin="round"/><polyline points="675.0,466.8 682.7,471.4 693.0,467.9" fill="none" stroke="#6b6b9c" stroke-width="1" stroke-linejoin="round"/><line x1="682.7" y1="471.4" x2="682.7" y2="482.0" stroke="#6b6b9c" stroke-width="1"/><polygon points="675.0,487.8 685.1,484.0 693.0,488.9 682.7,492.4" fill="#c8cbf0"/><polygon points="675.0,487.8 682.7,492.4 682.7,503.0 675.0,498.2" fill="#b0b4e6"/><polygon points="682.7,492.4 693.0,488.9 693.0,499.4 682.7,503.0" fill="#8a90d6"/><polygon points="675.0,487.8 685.1,484.0 693.0,488.9 693.0,499.4 682.7,503.0 675.0,498.2" fill="none" stroke="#6b6b9c" stroke-width="1" stroke-linejoin="round"/><polyline points="675.0,487.8 682.7,492.4 693.0,488.9" fill="none" stroke="#6b6b9c" stroke-width="1" stroke-linejoin="round"/><line x1="682.7" y1="492.4" x2="682.7" y2="503.0" stroke="#6b6b9c" stroke-width="1"/><path d="M676 490 L685 502 L692 488" fill="none" stroke="#6b6b9c" stroke-width="0.9"/><polygon points="675.0,508.8 685.1,505.0 693.0,509.9 682.7,513.4" fill="#dcdcf2"/><polygon points="675.0,508.8 682.7,513.4 682.7,524.0 675.0,519.2" fill="#c8cce8"/><polygon points="682.7,513.4 693.0,509.9 693.0,520.4 682.7,524.0" fill="#8d92d8"/><polygon points="675.0,508.8 685.1,505.0 693.0,509.9 693.0,520.4 682.7,524.0 675.0,519.2" fill="none" stroke="#6b6b9c" stroke-width="1" stroke-linejoin="round"/><polyline points="675.0,508.8 682.7,513.4 693.0,509.9" fill="none" stroke="#6b6b9c" stroke-width="1" stroke-linejoin="round"/><line x1="682.7" y1="513.4" x2="682.7" y2="524.0" stroke="#6b6b9c" stroke-width="1"/><polygon points="675.0,529.8 685.1,526.0 693.0,530.9 682.7,534.4" fill="#e2e2f6"/><polygon points="675.0,529.8 682.7,534.4 682.7,545.0 675.0,540.2" fill="#d6d8f2"/><polygon points="682.7,534.4 693.0,530.9 693.0,541.4 682.7,545.0" fill="#8d92d8"/><polygon points="675.0,529.8 685.1,526.0 693.0,530.9 693.0,541.4 682.7,545.0 675.0,540.2" fill="none" stroke="#6b6b9c" stroke-width="1" stroke-linejoin="round"/><polyline points="675.0,529.8 682.7,534.4 693.0,530.9" fill="none" stroke="#6b6b9c" stroke-width="1" stroke-linejoin="round"/><line x1="682.7" y1="534.4" x2="682.7" y2="545.0" stroke="#6b6b9c" stroke-width="1"/><path d="M681 569 L688 569 L692 573 L692 585 L681 585Z" fill="#e4f4fb" stroke="#3b8fc0" stroke-width="1"/><path d="M683 576h7M683 579h7M683 582h5" stroke="#3b7fb0" stroke-width="0.9"/><rect x="817.5" y="486.5" width="12" height="12" fill="#fff" stroke="#333"/><rect x="837.5" y="516.5" width="12" height="12" fill="#fff" stroke="#333"/><path d="M840 522 L842.5 525 L847 519" fill="none" stroke="#333" stroke-width="1.2"/><path d="M857 522 L862 530 L873 516" fill="none" stroke="#1f8a3f" stroke-width="3.6" stroke-linejoin="round"/><rect x="837.5" y="536.5" width="12" height="12" fill="#fff" stroke="#333"/><path d="M840 542 L842.5 545 L847 539" fill="none" stroke="#333" stroke-width="1.2"/><path d="M857 542 L862 550 L873 536" fill="none" stroke="#1f8a3f" stroke-width="3.6" stroke-linejoin="round"/><path d="M877 562 L882 570 L893 556" fill="none" stroke="#1f8a3f" stroke-width="3.6" stroke-linejoin="round"/><rect x="857.5" y="576.5" width="12" height="12" fill="#fff" stroke="#333"/><path d="M860 582 L862.5 585 L867 579" fill="none" stroke="#333" stroke-width="1.2"/><path d="M877 582 L882 590 L893 576" fill="none" stroke="#1f8a3f" stroke-width="3.6" stroke-linejoin="round"/><rect x="857.5" y="596.5" width="12" height="12" fill="#fff" stroke="#333"/><path d="M860 602 L862.5 605 L867 599" fill="none" stroke="#333" stroke-width="1.2"/><path d="M877 602 L882 610 L893 596" fill="none" stroke="#1f8a3f" stroke-width="3.6" stroke-linejoin="round"/><rect x="837.5" y="616.5" width="12" height="12" fill="#fff" stroke="#333"/><path d="M840 622 L842.5 625 L847 619" fill="none" stroke="#333" stroke-width="1.2"/><path d="M858 617 L872 629 M871 616 L859 630" stroke="#b82020" stroke-width="4.2" stroke-linecap="round"/><path d="M858 617 L872 629 M871 616 L859 630" stroke="#e23a3a" stroke-width="2.4" stroke-linecap="round"/><path d="M877 642 L882 650 L893 636" fill="none" stroke="#1f8a3f" stroke-width="3.6" stroke-linejoin="round"/><rect x="837.5" y="656.5" width="12" height="12" fill="#fff" stroke="#333"/><circle cx="865" cy="663" r="1.6" fill="#2030a8"/><rect x="837.5" y="676.5" width="12" height="12" fill="#fff" stroke="#333"/><circle cx="865" cy="683" r="1.6" fill="#2030a8"/><circle cx="1156" cy="712" r="5" fill="#bcdaf5" stroke="#4f7fb5" stroke-width="1.3"/><path d="M1152 716 L1145 723" stroke="#d8a848" stroke-width="3" stroke-linecap="round"/><path d="M984 820 Q983 820 983 822 L983 825 Q983 827 985 827 L992 827 L992 831 Q992 833 994 832 L1003 824.5 Q1004 823.5 1003 822.5 L994 815.5 Q992 814.5 992 816.5 L992 820Z" fill="#6fd64f" stroke="#2f8a2a" stroke-width="1.3" stroke-linejoin="round"/><path d="M1266 836 L1276 826 M1270 836 L1276 830 M1273 836 L1276 833" stroke="#a8a8a8" stroke-width="1"/></svg>
<span class="a" style="left:693.60px;top:308.93px;font-size:11.5px;line-height:11.5px;color:#111111">Fix Wizard (Part: Stl new) &gt; Diagnostics</span>
<span class="a" style="left:697.50px;top:341.73px;font-size:11.5px;line-height:11.5px;letter-spacing:0.081px;color:#111111">Diagnostics</span>
<span class="a" style="left:697.50px;top:363.03px;font-size:11.5px;line-height:11.5px;letter-spacing:0.119px;color:#111111">Combined Fix</span>
<span class="a" style="left:697.30px;top:405.23px;font-size:11.5px;line-height:11.5px;letter-spacing:0.190px;color:#111111">Normals</span>
<span class="a" style="left:697.30px;top:426.03px;font-size:11.5px;line-height:11.5px;letter-spacing:0.324px;color:#111111">Stitching</span>
<span class="a" style="left:697.30px;top:446.93px;font-size:11.5px;line-height:11.5px;color:#111111;transform:scaleX(0.9709)">Noise Shells</span>
<span class="a" style="left:697.30px;top:467.93px;font-size:11.5px;line-height:11.5px;color:#111111;transform:scaleX(0.9882)">Holes</span>
<span class="a" style="left:697.30px;top:489.03px;font-size:11.5px;line-height:11.5px;color:#111111;transform:scaleX(0.9614)">Triangles</span>
<span class="a" style="left:697.30px;top:509.83px;font-size:11.5px;line-height:11.5px;color:#111111;transform:scaleX(0.9791)">Overlaps</span>
<span class="a" style="left:697.30px;top:531.02px;font-size:11.5px;line-height:11.5px;color:#111111;transform:scaleX(0.9280)">Shells</span>
<span class="a" style="left:697.30px;top:573.23px;font-size:11.5px;line-height:11.5px;color:#111111;transform:scaleX(0.9923)">Profiles</span>
<span class="a" style="left:799.60px;top:334.12px;font-size:11.5px;line-height:11.5px;color:#111111;transform:scaleX(0.9736)">Current Part:</span>
<span class="a" style="left:878.40px;top:338.93px;font-size:11.5px;line-height:11.5px;color:#111111;transform:scaleX(0.9764)">Stl new</span>
<span class="a" style="left:1239.50px;top:340.03px;font-size:11.5px;line-height:11.5px;color:#a2a2a2;transform:scaleX(0.8998)">Next</span>
<span class="a" style="left:816.10px;top:387.03px;font-size:11.5px;line-height:11.5px;color:#111111;transform:scaleX(0.9496)">Advice</span>
<span class="a" style="left:820.60px;top:406.93px;font-size:11.5px;line-height:11.5px;color:#111111">Go to the 'Shells' page to unify shells or manually merge some parts.</span>
<span class="a" style="left:816.00px;top:467.23px;font-size:11.5px;line-height:11.5px;color:#111111;transform:scaleX(0.9934)">Diagnostics</span>
<span class="a" style="left:833.40px;top:488.23px;font-size:11.5px;line-height:11.5px;color:#111111;transform:scaleX(0.9599)">Full Analysis</span>
<span class="a" style="left:877.60px;top:516.83px;font-size:11.5px;line-height:11.5px;color:#111111;font-weight:bold">0</span>
<span class="a" style="left:922.30px;top:516.83px;font-size:11.5px;line-height:11.5px;letter-spacing:0.049px;color:#111111">inverted normals detected</span>
<span class="a" style="left:877.60px;top:536.83px;font-size:11.5px;line-height:11.5px;color:#111111;font-weight:bold">0</span>
<span class="a" style="left:922.30px;top:536.83px;font-size:11.5px;line-height:11.5px;letter-spacing:0.045px;color:#111111">bad edges detected</span>
<span class="a" style="left:897.60px;top:556.83px;font-size:11.5px;line-height:11.5px;color:#111111;font-weight:bold">0</span>
<span class="a" style="left:942.50px;top:556.83px;font-size:11.5px;line-height:11.5px;letter-spacing:0.135px;color:#111111">bad contours detected</span>
<span class="a" style="left:897.60px;top:576.83px;font-size:11.5px;line-height:11.5px;color:#111111;font-weight:bold">0</span>
<span class="a" style="left:942.50px;top:576.83px;font-size:11.5px;line-height:11.5px;letter-spacing:0.034px;color:#111111">near bad edges detected</span>
<span class="a" style="left:897.60px;top:596.83px;font-size:11.5px;line-height:11.5px;color:#111111;font-weight:bold">0</span>
<span class="a" style="left:942.50px;top:596.83px;font-size:11.5px;line-height:11.5px;letter-spacing:0.076px;color:#111111">planar holes detected</span>
<span class="a" style="left:877.60px;top:616.83px;font-size:11.5px;line-height:11.5px;color:#111111;font-weight:bold">2</span>
<span class="a" style="left:922.30px;top:616.83px;font-size:11.5px;line-height:11.5px;color:#111111">shells detected</span>
<span class="a" style="left:897.60px;top:636.83px;font-size:11.5px;line-height:11.5px;color:#111111;font-weight:bold">0</span>
<span class="a" style="left:942.50px;top:636.83px;font-size:11.5px;line-height:11.5px;letter-spacing:0.031px;color:#111111">possible noise shells detected</span>
<span class="a" style="left:922.30px;top:656.83px;font-size:11.5px;line-height:11.5px;letter-spacing:0.137px;color:#111111">overlapping triangles detected</span>
<span class="a" style="left:922.30px;top:676.83px;font-size:11.5px;line-height:11.5px;letter-spacing:0.124px;color:#111111">intersecting triangles detected</span>
<span class="a" style="left:1185.60px;top:709.62px;font-size:11.5px;line-height:11.5px;color:#111111;transform:scaleX(0.9131)">Update</span>
<span class="a" style="left:1029.30px;top:819.83px;font-size:11.5px;line-height:11.5px;color:#111111;transform:scaleX(0.9256)">Follow Advice</span>
<span class="a" style="left:1150.70px;top:819.23px;font-size:11.5px;line-height:11.5px;color:#111111;transform:scaleX(0.9274)">Close</span>
<span class="a" style="left:1217.30px;top:819.23px;font-size:11.5px;line-height:11.5px;color:#111111">Help</span>
</body></html>
